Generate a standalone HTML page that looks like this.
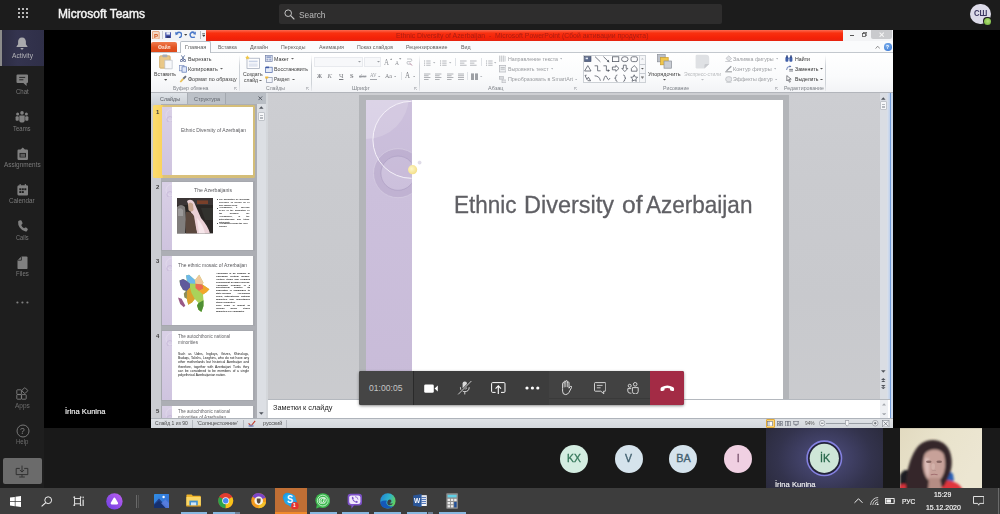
<!DOCTYPE html>
<html lang="en">
<head>
<meta charset="utf-8">
<title>Microsoft Teams</title>
<style>
html,body{margin:0;padding:0;background:#1a1a1a;}
body{width:1000px;height:514px;overflow:hidden;position:relative;font-family:"Liberation Sans",sans-serif;}
#app{position:absolute;left:0;top:0;width:1000px;height:514px;overflow:hidden;background:#1a1a1a;}
.b{position:absolute;display:block;box-sizing:border-box;}
.t{position:absolute;display:block;white-space:pre;transform-origin:0 50%;}
.clip{position:absolute;overflow:hidden;}
</style>
</head>
<body>
<div id="app">
<div class="b" style="left:0px;top:0px;width:1000px;height:29.6px;background:#1c1c1c;"></div>
<div class="b" style="left:44.4px;top:29.6px;width:955.6px;height:398.6px;background:#000;"></div>
<div class="b" style="left:44.4px;top:428px;width:955.6px;height:61px;background:#191919;"></div>
<div class="b" style="left:0px;top:29.6px;width:44.4px;height:459px;background:#1e1e1e;"></div>
<svg class="b" style="left:17.8px;top:8.3px;" width="10" height="10" viewBox="0 0 10 10"><rect x="0" y="0" width="2" height="2" rx="1" fill="#ececec"/><rect x="0" y="4" width="2" height="2" rx="1" fill="#ececec"/><rect x="0" y="8" width="2" height="2" rx="1" fill="#ececec"/><rect x="4" y="0" width="2" height="2" rx="1" fill="#ececec"/><rect x="4" y="4" width="2" height="2" rx="1" fill="#ececec"/><rect x="4" y="8" width="2" height="2" rx="1" fill="#ececec"/><rect x="8" y="0" width="2" height="2" rx="1" fill="#ececec"/><rect x="8" y="4" width="2" height="2" rx="1" fill="#ececec"/><rect x="8" y="8" width="2" height="2" rx="1" fill="#ececec"/></svg>
<span class="t" style="left:57.8px;top:7.18px;font:12.2px 'Liberation Sans',sans-serif;line-height:14.64px;color:#f4f4f4;transform:scaleX(0.983);-webkit-text-stroke:0.45px #f4f4f4;">Microsoft Teams</span>
<div class="b" style="left:279.2px;top:4px;width:442.8px;height:20px;background:#2e2d2d;border-radius:2px;"></div>
<svg class="b" style="left:283.6px;top:9px;" width="11" height="11" viewBox="0 0 11 11"><circle cx="4.2" cy="4.2" r="3.3" fill="none" stroke="#c4c4c4" stroke-width="1"/><path d="M6.7 6.7 L10 10" stroke="#c4c4c4" stroke-width="1.1" stroke-linecap="round"/></svg>
<span class="t" style="left:299px;top:8.64px;font:9.6px 'Liberation Sans',sans-serif;line-height:11.52px;color:#bdbdbd;transform:scaleX(0.872);">Search</span>
<div class="b" style="left:970.2px;top:3.6px;width:20.8px;height:20.8px;background:#dddbe9;border-radius:50%;"></div>
<span class="t" style="left:974px;top:9.18px;font:bold 8.2px 'Liberation Sans',sans-serif;line-height:9.84px;color:#3a3660;transform:scaleX(0.948);">СШ</span>
<div class="b" style="left:983.2px;top:16.7px;width:8.6px;height:8.6px;background:#1c1c1c;border-radius:50%;"></div>
<div class="b" style="left:984px;top:17.5px;width:7px;height:7px;background:radial-gradient(circle at 55% 45%,#b4e07a,#86c24e 60%,#6fae3c);border-radius:50%;"></div>
<div class="b" style="left:0px;top:29.6px;width:44.4px;height:36.4px;background:linear-gradient(90deg,#2b2b40,#34344f 40%,#2f2f48);"></div>
<div class="b" style="left:0px;top:29.6px;width:2.4px;height:36.4px;background:#8a8a8a;"></div>
<svg class="b" style="left:16px;top:36.6px;" width="12" height="13.5" viewBox="0 0 12 13.5"><path d="M6 0.4 C3.4 0.4 2.1 2.5 2.1 4.6 V7.2 L0.5 9.4 V10 H11.5 V9.4 L9.9 7.2 V4.6 C9.9 2.5 8.6 0.4 6 0.4 Z" fill="#a9a9ad"/><path d="M4.5 11 H7.5 C7.3 12.2 6.8 12.6 6 12.6 C5.2 12.6 4.7 12.2 4.5 11 Z" fill="#a9a9ad"/></svg>
<span class="t" style="left:11.5px;top:51.94px;font:6.6px 'Liberation Sans',sans-serif;line-height:7.92px;color:#b4b4b8;transform:scaleX(1.005);">Activity</span>
<svg class="b" style="left:16px;top:74px;" width="12.5" height="12.5" viewBox="0 0 12.5 12.5"><path d="M1.5 0.5 H11 Q12 0.5 12 1.5 V8 Q12 9 11 9 H10.6 V12 L7.4 9 H1.5 Q0.5 9 0.5 8 V1.5 Q0.5 0.5 1.5 0.5 Z" fill="#808080"/><path d="M3.2 3.4 H9.2 M3.2 5.8 H7.4" stroke="#1e1e1e" stroke-width="0.9"/></svg>
<span class="t" style="left:15.5px;top:87.74px;font:6.6px 'Liberation Sans',sans-serif;line-height:7.92px;color:#7a7a7a;transform:scaleX(0.918);">Chat</span>
<svg class="b" style="left:15px;top:110.5px;" width="14" height="12" viewBox="0 0 14 12"><circle cx="2.6" cy="3" r="1.5" fill="#808080"/><circle cx="7" cy="1.9" r="1.8" fill="#808080"/><circle cx="11.4" cy="3" r="1.5" fill="#808080"/><rect x="0.6" y="5.2" width="3.2" height="4.6" rx="1" fill="#808080"/><rect x="10.2" y="5.2" width="3.2" height="4.6" rx="1" fill="#808080"/><path d="M4.3 4.6 H9.7 V9.2 Q9.7 11.6 7 11.6 Q4.3 11.6 4.3 9.2 Z" fill="#808080"/></svg>
<span class="t" style="left:13.3px;top:124.64px;font:6.6px 'Liberation Sans',sans-serif;line-height:7.92px;color:#7a7a7a;transform:scaleX(0.906);">Teams</span>
<svg class="b" style="left:16.5px;top:146.5px;" width="11.5" height="13.5" viewBox="0 0 11.5 13.5"><path d="M1.6 2.6 H3.6 L5.75 0.4 L7.9 2.6 H9.9 Q11 2.6 11 3.8 V11.8 Q11 13 9.9 13 H1.6 Q0.5 13 0.5 11.8 V3.8 Q0.5 2.6 1.6 2.6 Z" fill="#808080"/><rect x="3" y="6.4" width="5.5" height="3.6" fill="none" stroke="#1e1e1e" stroke-width="0.9"/><path d="M3 8 H8.5" stroke="#1e1e1e" stroke-width="0.7"/></svg>
<span class="t" style="left:3.8px;top:160.74px;font:6.6px 'Liberation Sans',sans-serif;line-height:7.92px;color:#7a7a7a;transform:scaleX(0.970);">Assignments</span>
<svg class="b" style="left:16.5px;top:183.5px;" width="11.5" height="12" viewBox="0 0 11.5 12"><rect x="0.4" y="1.2" width="10.7" height="10.4" rx="1.6" fill="#808080"/><rect x="2.6" y="0" width="1.1" height="2.4" fill="#808080"/><rect x="7.8" y="0" width="1.1" height="2.4" fill="#808080"/><g fill="#1e1e1e"><rect x="2.3" y="4.3" width="2" height="1.9"/><rect x="4.8" y="4.3" width="2" height="1.9"/><rect x="7.3" y="4.3" width="2" height="1.9"/><rect x="2.3" y="7.1" width="2" height="1.9"/><rect x="4.8" y="7.1" width="2" height="1.9"/></g></svg>
<span class="t" style="left:9.3px;top:197.24px;font:6.6px 'Liberation Sans',sans-serif;line-height:7.92px;color:#7a7a7a;transform:scaleX(0.956);">Calendar</span>
<svg class="b" style="left:17px;top:220px;" width="11" height="12" viewBox="0 0 11 12"><path d="M2.2 0.6 L3.8 0.3 Q4.4 0.3 4.7 0.9 L5.5 3 Q5.6 3.6 5.2 4 L4.2 4.9 Q5 7 7.1 8.3 L8.2 7.6 Q8.7 7.3 9.2 7.6 L10.6 8.7 Q11 9.2 10.7 9.8 L10 11 Q9.5 11.7 8.6 11.6 Q5 11 2.7 7.6 Q0.8 4.6 1.1 1.8 Q1.3 0.9 2.2 0.6 Z" fill="#808080"/></svg>
<span class="t" style="left:15.6px;top:233.64px;font:6.6px 'Liberation Sans',sans-serif;line-height:7.92px;color:#7a7a7a;transform:scaleX(0.860);">Calls</span>
<svg class="b" style="left:17px;top:255.5px;" width="11" height="13.5" viewBox="0 0 11 13.5"><path d="M4.4 0.4 H9.4 Q10.5 0.4 10.5 1.5 V12 Q10.5 13.1 9.4 13.1 H1.6 Q0.5 13.1 0.5 12 V4.2 Z" fill="#808080"/><path d="M4.4 0.4 V4.2 H0.5" fill="none" stroke="#1e1e1e" stroke-width="0.8"/></svg>
<span class="t" style="left:15.8px;top:269.64px;font:6.6px 'Liberation Sans',sans-serif;line-height:7.92px;color:#7a7a7a;transform:scaleX(0.919);">Files</span>
<svg class="b" style="left:16px;top:301px;" width="13" height="3" viewBox="0 0 13 3"><circle cx="1.4" cy="1.5" r="1.1" fill="#808080"/><circle cx="6.4" cy="1.5" r="1.1" fill="#808080"/><circle cx="11.4" cy="1.5" r="1.1" fill="#808080"/></svg>
<svg class="b" style="left:15.5px;top:386.6px;" width="14" height="13.5" viewBox="0 0 14 13.5"><g fill="none" stroke="#808080" stroke-width="0.9"><rect x="0.8" y="2.8" width="4.6" height="4.6" rx="0.6"/><rect x="0.8" y="7.6" width="4.6" height="4.6" rx="0.6"/><rect x="5.6" y="7.6" width="4.6" height="4.6" rx="0.6"/><rect x="6.6" y="1.4" width="4.4" height="4.4" rx="0.6" transform="rotate(45 8.8 3.6)"/></g></svg>
<span class="t" style="left:14.8px;top:401.64px;font:6.6px 'Liberation Sans',sans-serif;line-height:7.92px;color:#6c6c6c;transform:scaleX(0.985);">Apps</span>
<svg class="b" style="left:15.5px;top:423.5px;" width="14" height="14" viewBox="0 0 14 14"><circle cx="7" cy="7" r="6" fill="none" stroke="#808080" stroke-width="0.9"/></svg>
<span class="t" style="left:20.1px;top:425.06px;font:9.4px 'Liberation Sans',sans-serif;line-height:11.28px;color:#808080;transform:scaleX(0.920);">?</span>
<span class="t" style="left:16.3px;top:437.84px;font:6.6px 'Liberation Sans',sans-serif;line-height:7.92px;color:#6c6c6c;transform:scaleX(0.914);">Help</span>
<div class="b" style="left:2.6px;top:458px;width:39px;height:26px;background:#6b6b6b;border-radius:2px;"></div>
<svg class="b" style="left:15px;top:464.5px;" width="14" height="13" viewBox="0 0 14 13"><g fill="none" stroke="#2a2a2a" stroke-width="0.9"><path d="M4.8 3.4 H1.2 V9.6 H12.8 V3.4 H9.2"/><path d="M7 0.6 V7 M4.8 4.9 L7 7.1 L9.2 4.9"/><path d="M7 9.6 V11.8 M4.2 12 H9.8"/></g></svg>
<span class="t" style="left:65px;top:406.72px;font:7.8px 'Liberation Sans',sans-serif;line-height:9.36px;color:#f3f3f3;transform:scaleX(0.973);-webkit-text-stroke:0.15px #f3f3f3;">İrina Kunina</span>
<div class="b" style="left:560.1px;top:444.6px;width:28.0px;height:28.0px;background:#d4ede1;border-radius:50%;"></div>
<span class="t" style="left:567.2px;top:452.32px;font:10.8px 'Liberation Sans',sans-serif;line-height:12.96px;color:#35775a;transform:scaleX(0.958);-webkit-text-stroke:0.35px #35775a;">KX</span>
<div class="b" style="left:614.6px;top:444.6px;width:28.0px;height:28.0px;background:#d5e3ec;border-radius:50%;"></div>
<span class="t" style="left:625.1px;top:452.32px;font:10.8px 'Liberation Sans',sans-serif;line-height:12.96px;color:#42606f;transform:scaleX(0.972);-webkit-text-stroke:0.35px #42606f;">V</span>
<div class="b" style="left:669.4px;top:444.6px;width:28.0px;height:28.0px;background:#d5e3ec;border-radius:50%;"></div>
<span class="t" style="left:676.2px;top:452.32px;font:10.8px 'Liberation Sans',sans-serif;line-height:12.96px;color:#42606f;-webkit-text-stroke:0.35px #42606f;">BA</span>
<div class="b" style="left:723.9px;top:444.6px;width:28.0px;height:28.0px;background:#f0d0e2;border-radius:50%;"></div>
<span class="t" style="left:736.7px;top:452.32px;font:10.8px 'Liberation Sans',sans-serif;line-height:12.96px;color:#6c4560;transform:scaleX(0.800);-webkit-text-stroke:0.35px #6c4560;">I</span>
<div class="b" style="left:765.5px;top:428px;width:117.7px;height:60.2px;background:radial-gradient(ellipse 62% 95% at 50% 50%, #4f4f82 0%, #424269 30%, #33334d 65%, #2a2a3b 100%);"></div>
<svg class="b" style="left:805px;top:439px;" width="39" height="39" viewBox="0 0 39 39"><circle cx="19.3" cy="19.3" r="17.2" fill="#23233a" stroke="#8481e0" stroke-width="1.6"/><circle cx="19.3" cy="19.3" r="14.6" fill="#cfe6d8"/></svg>
<span class="t" style="left:819.5px;top:451.34px;font:11.6px 'Liberation Sans',sans-serif;line-height:13.92px;color:#27674a;transform:scaleX(0.930);-webkit-text-stroke:0.35px #27674a;">İK</span>
<span class="t" style="left:775.4px;top:479.52px;font:7.8px 'Liberation Sans',sans-serif;line-height:9.36px;color:#f3f3f3;transform:scaleX(0.975);-webkit-text-stroke:0.15px #f3f3f3;">İrina Kunina</span>
<svg class="b" style="left:900px;top:428px;" width="82" height="60.2" viewBox="0 0 82 60"><defs><filter id="cb" x="-20%" y="-20%" width="140%" height="140%"><feGaussianBlur stdDeviation="0.9"/></filter><filter id="cb2" x="-20%" y="-20%" width="140%" height="140%"><feGaussianBlur stdDeviation="0.7"/></filter><linearGradient id="wall" x1="0" y1="0" x2="1" y2="0.4"><stop offset="0" stop-color="#e2dac0"/><stop offset="0.5" stop-color="#e9e3cc"/><stop offset="1" stop-color="#ece6d2"/></linearGradient><clipPath id="cc"><rect x="0" y="0" width="82" height="60"/></clipPath></defs><rect width="82" height="60" fill="url(#wall)"/><g clip-path="url(#cc)"><g filter="url(#cb)"><path d="M0 47 Q3 41 8 42 L12 62 H0 Z" fill="#1b1b20"/><path d="M45 46 Q50 42 53 46 L54 53 L46 55 Z" fill="#2c5fb4"/><path d="M-2 62 L0 57 Q4 55 7 57 L8 62 Z" fill="#d8333a"/><path d="M34 62 L38 55 Q46 50 54 54 Q60 56 63 62 Z" fill="#e0353c"/><path d="M6 62 C5 46 11 22 22 15 C32 9 46 12 50 24 C53 33 52 42 48 50 L44 58 L30 62 Z" fill="#36282a"/><path d="M24 28 C26 20 41 19 44 27 C46.5 36 45 45 41 50.5 C37 55 30.5 55 27 50.5 C23 45 22 36 24 28 Z" fill="#c7a199"/><path d="M29 50 H40 L42 62 H28 Z" fill="#b58d84"/><path d="M24.5 30 C25 37 25 44 28 50 C30 45 29 36 29 30 Z" fill="#e2c6c0" opacity="0.8"/></g><g filter="url(#cb2)"><ellipse cx="28.8" cy="33.6" rx="2.8" ry="1.2" fill="#7a5a56" opacity="0.85"/><ellipse cx="39.2" cy="33.6" rx="2.8" ry="1.2" fill="#7a5a56" opacity="0.85"/><path d="M30.8 46.6 Q34.2 45.8 37.6 46.6" stroke="#9a6468" stroke-width="1.1" fill="none" opacity="0.8"/><ellipse cx="33.2" cy="38.4" rx="1.8" ry="3.2" fill="#d8bab3" opacity="0.6"/><path d="M32.2 42.4 H36" stroke="#a88380" stroke-width="0.6" opacity="0.7"/></g></g></svg>
<div class="clip" style="left:151.3px;top:29.6px;width:741.3px;height:398.4px;background:#c6cacd;"><div class="b" style="left:-151.3px;top:-29.6px;width:1000px;height:514px;filter:blur(0.4px);">
<div class="b" style="left:140px;top:20px;width:770px;height:20.6px;background:#f3f4f6;"></div>
<div class="b" style="left:206.4px;top:29.6px;width:636.2px;height:11.2px;background:linear-gradient(#fb6a50 0%,#f9300f 28%,#f42208 72%,#e62410 100%);"></div>
<svg class="b" style="left:152.4px;top:30.6px;" width="7.6" height="8.6" viewBox="0 0 7.6 8.6"><rect x="0.4" y="0.4" width="6.8" height="7.8" rx="0.8" fill="#f6d9c4" stroke="#e08a50" stroke-width="0.7"/></svg>
<span class="t" style="left:154.2px;top:31.98px;font:bold 6.2px 'Liberation Sans',sans-serif;line-height:7.44px;color:#d1541c;transform:scaleX(0.966);">P</span>
<div class="b" style="left:162.4px;top:31px;width:0.6px;height:8px;background:#c9ccd1;"></div>
<svg class="b" style="left:164.8px;top:31.8px;" width="6.6" height="6.6" viewBox="0 0 6.6 6.6"><rect x="0.2" y="0.2" width="6.2" height="6.2" rx="0.5" fill="#4a58ac"/><rect x="1.4" y="0.2" width="3.6" height="2.4" fill="#e8ebf7"/><rect x="1.5" y="4" width="3.6" height="2.4" fill="#2f3878"/></svg>
<svg class="b" style="left:174.6px;top:31px;" width="7.6" height="7.4" viewBox="0 0 7.6 7.4"><path d="M1 3.2 Q2.4 0.8 5 1.4 Q7 2.2 6.6 4.4 Q6.2 6.4 4 6.8" fill="none" stroke="#4a78c8" stroke-width="1.5"/><path d="M0.2 0.8 L0.6 4.2 L3.6 3 Z" fill="#4a78c8"/></svg>
<svg class="b" style="left:183.6px;top:34.4px;" width="3.4" height="2" viewBox="0 0 3.4 2"><path d="M0 0 H3.4 L1.7 1.8 Z" fill="#444"/></svg>
<svg class="b" style="left:189.4px;top:31px;" width="7.6" height="7.4" viewBox="0 0 7.6 7.4"><path d="M5.6 1.6 Q3.2 0.4 1.6 2.2 Q0.4 4.2 2 5.8 Q3.8 7.2 5.8 5.8" fill="none" stroke="#4a78c8" stroke-width="1.5"/><path d="M6.8 0.4 L6.8 3.8 L3.8 3 Z" fill="#4a78c8"/></svg>
<div class="b" style="left:200.2px;top:31px;width:0.6px;height:8px;background:#b9bcc2;"></div>
<svg class="b" style="left:201.8px;top:33px;" width="3.6" height="4.4" viewBox="0 0 3.6 4.4"><path d="M0.2 0.4 H3.4" stroke="#555" stroke-width="0.7"/><path d="M0 1.8 H3.6 L1.8 4 Z" fill="#444"/></svg>
<span class="t" style="left:395.5px;top:31.84px;font:6.6px 'Liberation Sans',sans-serif;line-height:7.92px;color:#ab1d12;transform:scaleX(1.043);">Ethnic Diversity of Azerbaijan  -  Microsoft PowerPoint (Сбой активации продукта)</span>
<div class="b" style="left:849.8px;top:35.2px;width:4.4px;height:1.3px;background:#555;"></div>
<svg class="b" style="left:861.8px;top:32.2px;" width="5.4" height="5.4" viewBox="0 0 5.4 5.4"><rect x="1.6" y="0.4" width="3.2" height="3" fill="none" stroke="#666" stroke-width="0.8"/><rect x="0.4" y="1.6" width="3.2" height="3" fill="#f3f4f6" stroke="#555" stroke-width="0.8"/></svg>
<div class="b" style="left:871.4px;top:29.3px;width:20.4px;height:10px;background:#c9cacd;border-radius:0 0 2px 2px;"></div>
<svg class="b" style="left:878.6px;top:32px;" width="5.4" height="5.4" viewBox="0 0 5.4 5.4"><path d="M0.6 0.6 L4.8 4.8 M4.8 0.6 L0.6 4.8" stroke="#f4f4f4" stroke-width="1.1"/></svg>
<div class="b" style="left:140px;top:40.5px;width:770px;height:12px;background:#fafbfc;"></div>
<div class="b" style="left:140px;top:52px;width:770px;height:0.9px;background:#c3c8ce;"></div>
<div class="b" style="left:151.3px;top:41.6px;width:26px;height:10.6px;background:linear-gradient(#ef7a4c,#e2521f 55%,#dd4a1a);border-radius:2px 2px 0 0;"></div>
<span class="t" style="left:158px;top:43.28px;font:bold 6.2px 'Liberation Sans',sans-serif;line-height:7.44px;color:#fde7da;transform:scaleX(0.765);">Файл</span>
<div class="b" style="left:179.6px;top:41.2px;width:31.6px;height:11.8px;background:#ffffff;border:0.8px solid #b9bfc6;border-bottom:none;border-radius:2px 2px 0 0;"></div>
<span class="t" style="left:184.8px;top:43.48px;font:6.2px 'Liberation Sans',sans-serif;line-height:7.44px;color:#5e5e5e;transform:scaleX(0.908);">Главная</span>
<span class="t" style="left:217.6px;top:43.48px;font:6.2px 'Liberation Sans',sans-serif;line-height:7.44px;color:#5e5e5e;transform:scaleX(0.817);">Вставка</span>
<span class="t" style="left:249.6px;top:43.48px;font:6.2px 'Liberation Sans',sans-serif;line-height:7.44px;color:#5e5e5e;transform:scaleX(0.865);">Дизайн</span>
<span class="t" style="left:281.2px;top:43.48px;font:6.2px 'Liberation Sans',sans-serif;line-height:7.44px;color:#5e5e5e;transform:scaleX(0.840);">Переходы</span>
<span class="t" style="left:319px;top:43.48px;font:6.2px 'Liberation Sans',sans-serif;line-height:7.44px;color:#5e5e5e;transform:scaleX(0.861);">Анимация</span>
<span class="t" style="left:357px;top:43.48px;font:6.2px 'Liberation Sans',sans-serif;line-height:7.44px;color:#5e5e5e;transform:scaleX(0.845);">Показ слайдов</span>
<span class="t" style="left:406px;top:43.48px;font:6.2px 'Liberation Sans',sans-serif;line-height:7.44px;color:#5e5e5e;transform:scaleX(0.866);">Рецензирование</span>
<span class="t" style="left:461px;top:43.48px;font:6.2px 'Liberation Sans',sans-serif;line-height:7.44px;color:#5e5e5e;transform:scaleX(0.857);">Вид</span>
<svg class="b" style="left:875px;top:45px;" width="5.4" height="4.4" viewBox="0 0 5.4 4.4"><path d="M0.6 3.6 L2.7 1.2 L4.8 3.6" fill="none" stroke="#777" stroke-width="0.8"/></svg>
<div class="b" style="left:884px;top:43.2px;width:7.6px;height:7.6px;background:radial-gradient(circle at 40% 35%,#7fb2ee,#2f6fcf);border-radius:50%;"></div>
<span class="t" style="left:886.3px;top:43.5px;font:bold 6px 'Liberation Sans',sans-serif;line-height:7.2px;color:#fff;transform:scaleX(0.817);">?</span>
<div class="b" style="left:140px;top:52.9px;width:770px;height:39px;background:linear-gradient(#ffffff 0%,#fafbfc 60%,#f2f3f6 100%);"></div>
<div class="b" style="left:140px;top:91.7px;width:770px;height:1.7px;background:#b2b5bb;"></div>
<div class="b" style="left:239.2px;top:54.5px;width:0.7px;height:36px;background:linear-gradient(rgba(200,204,210,0),#cfd3d8 30%,#cfd3d8 80%,rgba(200,204,210,0.3));"></div>
<div class="b" style="left:311.2px;top:54.5px;width:0.7px;height:36px;background:linear-gradient(rgba(200,204,210,0),#cfd3d8 30%,#cfd3d8 80%,rgba(200,204,210,0.3));"></div>
<div class="b" style="left:419.2px;top:54.5px;width:0.7px;height:36px;background:linear-gradient(rgba(200,204,210,0),#cfd3d8 30%,#cfd3d8 80%,rgba(200,204,210,0.3));"></div>
<div class="b" style="left:579.6px;top:54.5px;width:0.7px;height:36px;background:linear-gradient(rgba(200,204,210,0),#cfd3d8 30%,#cfd3d8 80%,rgba(200,204,210,0.3));"></div>
<div class="b" style="left:780.6px;top:54.5px;width:0.7px;height:36px;background:linear-gradient(rgba(200,204,210,0),#cfd3d8 30%,#cfd3d8 80%,rgba(200,204,210,0.3));"></div>
<div class="b" style="left:825.2px;top:54.5px;width:0.7px;height:36px;background:linear-gradient(rgba(200,204,210,0),#cfd3d8 30%,#cfd3d8 80%,rgba(200,204,210,0.3));"></div>
<span class="t" style="left:172.6px;top:84.28px;font:6.2px 'Liberation Sans',sans-serif;line-height:7.44px;color:#7d8187;transform:scaleX(0.842);">Буфер обмена</span>
<span class="t" style="left:266.2px;top:84.28px;font:6.2px 'Liberation Sans',sans-serif;line-height:7.44px;color:#7d8187;transform:scaleX(0.816);">Слайды</span>
<span class="t" style="left:352px;top:84.28px;font:6.2px 'Liberation Sans',sans-serif;line-height:7.44px;color:#7d8187;transform:scaleX(0.884);">Шрифт</span>
<span class="t" style="left:487.6px;top:84.28px;font:6.2px 'Liberation Sans',sans-serif;line-height:7.44px;color:#7d8187;transform:scaleX(0.887);">Абзац</span>
<span class="t" style="left:663px;top:84.28px;font:6.2px 'Liberation Sans',sans-serif;line-height:7.44px;color:#7d8187;transform:scaleX(0.841);">Рисование</span>
<span class="t" style="left:784.2px;top:84.28px;font:6.2px 'Liberation Sans',sans-serif;line-height:7.44px;color:#7d8187;transform:scaleX(0.844);">Редактирование</span>
<svg class="b" style="left:234px;top:86.6px;" width="3" height="3" viewBox="0 0 3 3"><path d="M0.3 2.7 V0.3 H2.7" fill="none" stroke="#8d9197" stroke-width="0.6"/><path d="M1.4 1.4 L2.8 2.8" stroke="#8d9197" stroke-width="0.6"/></svg>
<svg class="b" style="left:305.6px;top:86.6px;" width="3" height="3" viewBox="0 0 3 3"><path d="M0.3 2.7 V0.3 H2.7" fill="none" stroke="#8d9197" stroke-width="0.6"/><path d="M1.4 1.4 L2.8 2.8" stroke="#8d9197" stroke-width="0.6"/></svg>
<svg class="b" style="left:413.6px;top:86.6px;" width="3" height="3" viewBox="0 0 3 3"><path d="M0.3 2.7 V0.3 H2.7" fill="none" stroke="#8d9197" stroke-width="0.6"/><path d="M1.4 1.4 L2.8 2.8" stroke="#8d9197" stroke-width="0.6"/></svg>
<svg class="b" style="left:574px;top:86.6px;" width="3" height="3" viewBox="0 0 3 3"><path d="M0.3 2.7 V0.3 H2.7" fill="none" stroke="#8d9197" stroke-width="0.6"/><path d="M1.4 1.4 L2.8 2.8" stroke="#8d9197" stroke-width="0.6"/></svg>
<svg class="b" style="left:775px;top:86.6px;" width="3" height="3" viewBox="0 0 3 3"><path d="M0.3 2.7 V0.3 H2.7" fill="none" stroke="#8d9197" stroke-width="0.6"/><path d="M1.4 1.4 L2.8 2.8" stroke="#8d9197" stroke-width="0.6"/></svg>
<svg class="b" style="left:158.6px;top:54.4px;" width="14" height="15.4" viewBox="0 0 14 15.4"><rect x="0.6" y="1.8" width="10.6" height="12.4" rx="1" fill="#e9c888" stroke="#c9a25a" stroke-width="0.7"/><rect x="3.4" y="0.4" width="5" height="2.8" rx="0.8" fill="#a9adb6"/><path d="M5.8 6.2 H13.2 V14.8 H5.8 Z" fill="#f7f8fb" stroke="#b4b9c4" stroke-width="0.6"/></svg>
<span class="t" style="left:154.2px;top:70.28px;font:6.2px 'Liberation Sans',sans-serif;line-height:7.44px;color:#3a3a3a;transform:scaleX(0.839);">Вставить</span>
<svg class="b" style="left:163.8px;top:78.8px;" width="3.4" height="2" viewBox="0 0 3.4 2"><path d="M0 0 H3.4 L1.7 1.8 Z" fill="#555"/></svg>
<svg class="b" style="left:180px;top:55.2px;" width="6" height="7" viewBox="0 0 6 7"><path d="M1.4 0.4 L4.4 5 M4.6 0.4 L1.6 5" stroke="#5a6e9a" stroke-width="0.9"/><circle cx="1.4" cy="5.6" r="1.1" fill="none" stroke="#3d4f82" stroke-width="0.8"/><circle cx="4.6" cy="5.6" r="1.1" fill="none" stroke="#3d4f82" stroke-width="0.8"/></svg>
<span class="t" style="left:187.6px;top:54.88px;font:6.2px 'Liberation Sans',sans-serif;line-height:7.44px;color:#3a3a3a;transform:scaleX(0.850);">Вырезать</span>
<svg class="b" style="left:179px;top:65.4px;" width="8" height="7.4" viewBox="0 0 8 7.4"><rect x="0.4" y="0.4" width="4.6" height="5.4" fill="#eef2fa" stroke="#7f93c2" stroke-width="0.7"/><rect x="3" y="1.8" width="4.6" height="5.4" fill="#dfe7f8" stroke="#5d77b4" stroke-width="0.7"/></svg>
<span class="t" style="left:187.6px;top:65.28px;font:6.2px 'Liberation Sans',sans-serif;line-height:7.44px;color:#3a3a3a;transform:scaleX(0.900);">Копировать</span>
<svg class="b" style="left:219.6px;top:68.4px;" width="3" height="1.8" viewBox="0 0 3 1.8"><path d="M0 0 H3 L1.5 1.6 Z" fill="#666"/></svg>
<svg class="b" style="left:179px;top:75.4px;" width="8" height="7.6" viewBox="0 0 8 7.6"><path d="M0.6 6.8 L3.4 3.2 L5 4.6 L2 7.4 Z" fill="#e9c25a"/><path d="M3.6 3 L6.4 0.6 L7.6 1.8 L5 4.4 Z" fill="#6a6f7a"/></svg>
<span class="t" style="left:187.6px;top:75.48px;font:6.2px 'Liberation Sans',sans-serif;line-height:7.44px;color:#3a3a3a;transform:scaleX(0.876);">Формат по образцу</span>
<svg class="b" style="left:244.6px;top:54.6px;" width="15" height="15" viewBox="0 0 15 15"><rect x="2" y="3.2" width="12.4" height="10.4" fill="#fdfdfe" stroke="#9aa3b4" stroke-width="0.7"/><rect x="3.8" y="5.6" width="8.8" height="1.6" fill="#c8d2e6"/><rect x="3.8" y="8.4" width="8.8" height="3.4" fill="#e0e5f0"/><path d="M2.4 0.2 L3.1 1.7 L4.7 2 L3.5 3 L3.9 4.6 L2.4 3.8 L0.9 4.6 L1.3 3 L0.1 2 L1.7 1.7 Z" fill="#f2c744"/></svg>
<span class="t" style="left:242.6px;top:70.28px;font:6.2px 'Liberation Sans',sans-serif;line-height:7.44px;color:#3a3a3a;transform:scaleX(0.833);">Создать</span>
<span class="t" style="left:243.6px;top:76.28px;font:6.2px 'Liberation Sans',sans-serif;line-height:7.44px;color:#3a3a3a;transform:scaleX(0.813);">слайд</span>
<svg class="b" style="left:258.8px;top:79.6px;" width="3" height="1.8" viewBox="0 0 3 1.8"><path d="M0 0 H3 L1.5 1.6 Z" fill="#666"/></svg>
<svg class="b" style="left:265px;top:55.4px;" width="7.6" height="6.8" viewBox="0 0 7.6 6.8"><rect x="0.4" y="0.4" width="6.8" height="6" fill="#eef1f8" stroke="#6f7fa8" stroke-width="0.7"/><rect x="1.4" y="1.4" width="4.8" height="1.4" fill="#7d8fc0"/><rect x="1.4" y="3.6" width="2" height="2" fill="#9aa7cc"/><rect x="4.2" y="3.6" width="2" height="2" fill="#9aa7cc"/></svg>
<span class="t" style="left:274.2px;top:54.88px;font:6.2px 'Liberation Sans',sans-serif;line-height:7.44px;color:#3a3a3a;transform:scaleX(0.856);">Макет</span>
<svg class="b" style="left:291.2px;top:58px;" width="3" height="1.8" viewBox="0 0 3 1.8"><path d="M0 0 H3 L1.5 1.6 Z" fill="#666"/></svg>
<svg class="b" style="left:265px;top:65.6px;" width="7.6" height="7" viewBox="0 0 7.6 7"><rect x="0.4" y="1.2" width="6.8" height="5.4" fill="#e6ecf8" stroke="#4c66a8" stroke-width="0.7"/><path d="M1 0.6 H4 V2.2 H1 Z" fill="#3f5aa6"/></svg>
<span class="t" style="left:274.2px;top:65.28px;font:6.2px 'Liberation Sans',sans-serif;line-height:7.44px;color:#3a3a3a;transform:scaleX(0.858);">Восстановить</span>
<svg class="b" style="left:265px;top:75.8px;" width="7.6" height="7" viewBox="0 0 7.6 7"><rect x="1.4" y="1.4" width="5.8" height="5" fill="#f4f6fb" stroke="#8a93a8" stroke-width="0.7"/><path d="M0.2 0.4 H3.4 L3 2.4 H0.2 Z" fill="#f0b93c"/></svg>
<span class="t" style="left:274.2px;top:75.48px;font:6.2px 'Liberation Sans',sans-serif;line-height:7.44px;color:#3a3a3a;transform:scaleX(0.763);">Раздел</span>
<svg class="b" style="left:292px;top:78.6px;" width="3" height="1.8" viewBox="0 0 3 1.8"><path d="M0 0 H3 L1.5 1.6 Z" fill="#666"/></svg>
<div class="b" style="left:314px;top:57.4px;width:48.6px;height:9.6px;background:#f7f8fa;border:0.7px solid #e8eaee;"></div>
<div class="b" style="left:364px;top:57.4px;width:17.4px;height:9.6px;background:#f7f8fa;border:0.7px solid #e8eaee;"></div>
<svg class="b" style="left:357.6px;top:61.4px;" width="3" height="1.8" viewBox="0 0 3 1.8"><path d="M0 0 H3 L1.5 1.6 Z" fill="#9a9da2"/></svg>
<svg class="b" style="left:376.6px;top:61.4px;" width="3" height="1.8" viewBox="0 0 3 1.8"><path d="M0 0 H3 L1.5 1.6 Z" fill="#9a9da2"/></svg>
<span class="t" style="left:384.4px;top:57.64px;font:7.6px 'Liberation Serif',serif;line-height:9.12px;color:#8e9196;transform:scaleX(0.912);">A</span>
<span class="t" style="left:395.4px;top:58.76px;font:6.4px 'Liberation Serif',serif;line-height:7.68px;color:#8e9196;transform:scaleX(0.865);">A</span>
<svg class="b" style="left:389.6px;top:57.8px;" width="2.4" height="2" viewBox="0 0 2.4 2"><path d="M0 2 L1.2 0.2 L2.4 2 Z" fill="#9a9da2"/></svg>
<svg class="b" style="left:399.4px;top:58.2px;" width="2.4" height="2" viewBox="0 0 2.4 2"><path d="M0 0 L1.2 1.8 L2.4 0 Z" fill="#9a9da2"/></svg>
<svg class="b" style="left:406px;top:57.8px;" width="7" height="8" viewBox="0 0 7 8"><path d="M1 1 H5.4 Q6.4 2.4 5 3.6 H1.4 Q0.4 5 1.6 6.2 H5.2" fill="none" stroke="#b4b7bc" stroke-width="0.8"/><path d="M3.4 5 L6.4 7.6" stroke="#c9a0b4" stroke-width="1"/></svg>
<span class="t" style="left:317.2px;top:72.24px;font:bold 6.6px 'Liberation Serif',serif;line-height:7.92px;color:#7a7c81;transform:scaleX(0.766);">Ж</span>
<span class="t" style="left:327.4px;top:72.24px;font:italic 6.6px 'Liberation Serif',serif;line-height:7.92px;color:#7a7c81;">К</span>
<span class="t" style="left:338.6px;top:72.24px;font:6.6px 'Liberation Serif',serif;line-height:7.92px;color:#7a7c81;transform:scaleX(1.024);text-decoration:underline;">Ч</span>
<span class="t" style="left:350.4px;top:72.24px;font:bold 6.6px 'Liberation Serif',serif;line-height:7.92px;color:#7a7c81;transform:scaleX(0.980);">S</span>
<span class="t" style="left:359px;top:72.84px;font:5.6px 'Liberation Serif',serif;line-height:6.72px;color:#9a9da2;transform:scaleX(0.953);text-decoration:line-through;">abc</span>
<span class="t" style="left:370px;top:71.96px;font:5.4px 'Liberation Serif',serif;line-height:6.48px;color:#9a9da2;transform:scaleX(0.902);">AV</span>
<div class="b" style="left:370px;top:78.8px;width:6.6px;height:0.6px;background:#a4a7ac;"></div>
<svg class="b" style="left:378.4px;top:75.8px;" width="2.4" height="1.6" viewBox="0 0 2.4 1.6"><path d="M0 0 H2.4 L1.2 1.4 Z" fill="#a4a7ac"/></svg>
<span class="t" style="left:385px;top:72.36px;font:6.4px 'Liberation Serif',serif;line-height:7.68px;color:#7a7c81;transform:scaleX(0.939);">Aa</span>
<svg class="b" style="left:393.6px;top:75.8px;" width="2.4" height="1.6" viewBox="0 0 2.4 1.6"><path d="M0 0 H2.4 L1.2 1.4 Z" fill="#a4a7ac"/></svg>
<span class="t" style="left:405px;top:71.56px;font:7.4px 'Liberation Serif',serif;line-height:8.88px;color:#7a7c81;transform:scaleX(0.936);">A</span>
<svg class="b" style="left:413px;top:75.8px;" width="2.4" height="1.6" viewBox="0 0 2.4 1.6"><path d="M0 0 H2.4 L1.2 1.4 Z" fill="#a4a7ac"/></svg>
<div class="b" style="left:401.2px;top:72.4px;width:0.6px;height:8px;background:#dfe2e6;"></div>
<svg class="b" style="left:424px;top:59.6px;" width="7.0" height="7.300000000000001" viewBox="0 0 7.0 7.300000000000001"><rect x="2.2" y="0.6" width="4.3999999999999995" height="0.8" fill="#a6a9ae"/><rect x="0" y="0.5" width="1.1" height="1" fill="#a6a9ae"/><rect x="2.2" y="2.7" width="4.3999999999999995" height="0.8" fill="#a6a9ae"/><rect x="0" y="2.6" width="1.1" height="1" fill="#a6a9ae"/><rect x="2.2" y="4.8" width="4.3999999999999995" height="0.8" fill="#a6a9ae"/><rect x="0" y="4.7" width="1.1" height="1" fill="#a6a9ae"/></svg>
<svg class="b" style="left:433.4px;top:62px;" width="2.4" height="1.6" viewBox="0 0 2.4 1.6"><path d="M0 0 H2.4 L1.2 1.4 Z" fill="#b4b7bc"/></svg>
<svg class="b" style="left:440px;top:59.6px;" width="7.0" height="7.300000000000001" viewBox="0 0 7.0 7.300000000000001"><rect x="2.2" y="0.6" width="4.3999999999999995" height="0.8" fill="#a6a9ae"/><rect x="0" y="0.5" width="1.1" height="1" fill="#a6a9ae"/><rect x="2.2" y="2.7" width="4.3999999999999995" height="0.8" fill="#a6a9ae"/><rect x="0" y="2.6" width="1.1" height="1" fill="#a6a9ae"/><rect x="2.2" y="4.8" width="4.3999999999999995" height="0.8" fill="#a6a9ae"/><rect x="0" y="4.7" width="1.1" height="1" fill="#a6a9ae"/></svg>
<svg class="b" style="left:449.4px;top:62px;" width="2.4" height="1.6" viewBox="0 0 2.4 1.6"><path d="M0 0 H2.4 L1.2 1.4 Z" fill="#b4b7bc"/></svg>
<div class="b" style="left:455.4px;top:58.4px;width:0.6px;height:8px;background:#dfe2e6;"></div>
<svg class="b" style="left:460px;top:59.6px;" width="7.0" height="7.300000000000001" viewBox="0 0 7.0 7.300000000000001"><rect x="0" y="0.6" width="6.6" height="0.8" fill="#a6a9ae"/><rect x="0" y="2.7" width="4.4" height="0.8" fill="#a6a9ae"/><rect x="0" y="4.8" width="6.6" height="0.8" fill="#a6a9ae"/></svg>
<svg class="b" style="left:470.4px;top:59.6px;" width="7.0" height="7.300000000000001" viewBox="0 0 7.0 7.300000000000001"><rect x="0" y="0.6" width="6.6" height="0.8" fill="#a6a9ae"/><rect x="0" y="2.7" width="4.4" height="0.8" fill="#a6a9ae"/><rect x="0" y="4.8" width="6.6" height="0.8" fill="#a6a9ae"/></svg>
<div class="b" style="left:481.4px;top:58.4px;width:0.6px;height:8px;background:#dfe2e6;"></div>
<svg class="b" style="left:486px;top:59.6px;" width="7.0" height="7.300000000000001" viewBox="0 0 7.0 7.300000000000001"><rect x="2.2" y="0.6" width="4.3999999999999995" height="0.8" fill="#a6a9ae"/><rect x="0" y="0.5" width="1.1" height="1" fill="#a6a9ae"/><rect x="2.2" y="2.7" width="4.3999999999999995" height="0.8" fill="#a6a9ae"/><rect x="0" y="2.6" width="1.1" height="1" fill="#a6a9ae"/><rect x="2.2" y="4.8" width="4.3999999999999995" height="0.8" fill="#a6a9ae"/><rect x="0" y="4.7" width="1.1" height="1" fill="#a6a9ae"/></svg>
<svg class="b" style="left:494.4px;top:62px;" width="2.4" height="1.6" viewBox="0 0 2.4 1.6"><path d="M0 0 H2.4 L1.2 1.4 Z" fill="#b4b7bc"/></svg>
<svg class="b" style="left:424px;top:72.8px;" width="6.800000000000001" height="8.2" viewBox="0 0 6.800000000000001 8.2"><rect x="0" y="0.6" width="6.4" height="0.8" fill="#9da0a5"/><rect x="0" y="2.4" width="4.6" height="0.8" fill="#9da0a5"/><rect x="0" y="4.2" width="6.4" height="0.8" fill="#9da0a5"/><rect x="0" y="6.0" width="4.6" height="0.8" fill="#9da0a5"/></svg>
<svg class="b" style="left:435.4px;top:72.8px;" width="6.800000000000001" height="8.2" viewBox="0 0 6.800000000000001 8.2"><rect x="0" y="0.6" width="6.4" height="0.8" fill="#9da0a5"/><rect x="0" y="2.4" width="4.6" height="0.8" fill="#9da0a5"/><rect x="0" y="4.2" width="6.4" height="0.8" fill="#9da0a5"/><rect x="0" y="6.0" width="4.6" height="0.8" fill="#9da0a5"/></svg>
<svg class="b" style="left:446.8px;top:72.8px;" width="6.800000000000001" height="8.2" viewBox="0 0 6.800000000000001 8.2"><rect x="0" y="0.6" width="6.4" height="0.8" fill="#9da0a5"/><rect x="0" y="2.4" width="4.6" height="0.8" fill="#9da0a5"/><rect x="0" y="4.2" width="6.4" height="0.8" fill="#9da0a5"/><rect x="0" y="6.0" width="4.6" height="0.8" fill="#9da0a5"/></svg>
<svg class="b" style="left:457.6px;top:72.8px;" width="6.800000000000001" height="8.2" viewBox="0 0 6.800000000000001 8.2"><rect x="0" y="0.6" width="6.4" height="0.8" fill="#9da0a5"/><rect x="0" y="2.4" width="6.4" height="0.8" fill="#9da0a5"/><rect x="0" y="4.2" width="6.4" height="0.8" fill="#9da0a5"/><rect x="0" y="6.0" width="6.4" height="0.8" fill="#9da0a5"/></svg>
<div class="b" style="left:466.6px;top:72.4px;width:0.6px;height:8px;background:#dfe2e6;"></div>
<svg class="b" style="left:471px;top:72.6px;" width="7.4" height="7.6" viewBox="0 0 7.4 7.6"><g fill="#9da0a5"><rect x="0" y="0.4" width="3" height="6.8"/><rect x="4" y="0.4" width="3" height="6.8"/></g></svg>
<svg class="b" style="left:480.4px;top:75.8px;" width="2.4" height="1.6" viewBox="0 0 2.4 1.6"><path d="M0 0 H2.4 L1.2 1.4 Z" fill="#b4b7bc"/></svg>
<svg class="b" style="left:498.6px;top:54.8px;" width="7" height="7.4" viewBox="0 0 7 7.4"><path d="M0.8 0.6 V6.8 M2.8 0.6 V6.8 M4.8 0.6 V6.8" stroke="#b0b3b8" stroke-width="0.9"/><path d="M6.4 1 V6.4" stroke="#c4c7cc" stroke-width="0.6"/></svg>
<span class="t" style="left:507.6px;top:54.68px;font:6.2px 'Liberation Sans',sans-serif;line-height:7.44px;color:#999b9f;transform:scaleX(0.852);">Направление текста</span>
<svg class="b" style="left:559.6px;top:58px;" width="2.4" height="1.6" viewBox="0 0 2.4 1.6"><path d="M0 0 H2.4 L1.2 1.4 Z" fill="#b4b7bc"/></svg>
<svg class="b" style="left:498.6px;top:65.4px;" width="7.4" height="7.4" viewBox="0 0 7.4 7.4"><rect x="0.4" y="0.4" width="6.6" height="6.6" fill="#eef0f2" stroke="#b0b3b8" stroke-width="0.7"/><path d="M1.6 2.6 H5.8 M1.6 4.2 H5.8" stroke="#a6a9ae" stroke-width="0.7"/></svg>
<span class="t" style="left:507.6px;top:65.28px;font:6.2px 'Liberation Sans',sans-serif;line-height:7.44px;color:#999b9f;transform:scaleX(0.842);">Выровнять текст</span>
<svg class="b" style="left:550.6px;top:68.4px;" width="2.4" height="1.6" viewBox="0 0 2.4 1.6"><path d="M0 0 H2.4 L1.2 1.4 Z" fill="#b4b7bc"/></svg>
<svg class="b" style="left:498.6px;top:75.6px;" width="7.6" height="7.4" viewBox="0 0 7.6 7.4"><rect x="0.4" y="0.6" width="4" height="2.6" fill="#d9dbde" stroke="#b0b3b8" stroke-width="0.6"/><rect x="3" y="4" width="4.2" height="2.8" fill="#e6e7ea" stroke="#b0b3b8" stroke-width="0.6"/></svg>
<span class="t" style="left:507.6px;top:75.48px;font:6.2px 'Liberation Sans',sans-serif;line-height:7.44px;color:#999b9f;transform:scaleX(0.866);">Преобразовать в SmartArt</span>
<svg class="b" style="left:574.6px;top:78.6px;" width="2.4" height="1.6" viewBox="0 0 2.4 1.6"><path d="M0 0 H2.4 L1.2 1.4 Z" fill="#b4b7bc"/></svg>
<div class="b" style="left:582.6px;top:54.5px;width:63.6px;height:28.2px;background:#fcfcfd;border:0.7px solid #cdd1d6;"></div>
<div class="b" style="left:638.8px;top:54.5px;width:7.4px;height:28.2px;background:#f5f6f8;border:0.7px solid #cdd1d6;"></div>
<div class="b" style="left:638.8px;top:63.6px;width:7.4px;height:0.7px;background:#c8ccd2;"></div>
<div class="b" style="left:638.8px;top:73px;width:7.4px;height:0.7px;background:#c8ccd2;"></div>
<svg class="b" style="left:641.2px;top:58.4px;" width="2.8" height="1.8" viewBox="0 0 2.8 1.8"><path d="M0 1.6 L1.4 0 L2.8 1.6 Z" fill="#b8bbc0"/></svg>
<svg class="b" style="left:641.2px;top:68px;" width="2.8" height="1.8" viewBox="0 0 2.8 1.8"><path d="M0 0 H2.8 L1.4 1.6 Z" fill="#555"/></svg>
<svg class="b" style="left:641.2px;top:76.4px;" width="2.8" height="3" viewBox="0 0 2.8 3"><path d="M0 0.3 H2.8" stroke="#555" stroke-width="0.6"/><path d="M0 1.2 H2.8 L1.4 2.8 Z" fill="#555"/></svg>
<svg class="b" style="left:582.6px;top:53.9px;" width="58" height="29" viewBox="0 0 58 29"><rect x="1.6" y="2.6" width="6.4" height="5" fill="#5b6a8c" stroke="#3d4660" stroke-width="0.6"/><rect x="2.6" y="3.6" width="2.4" height="1.6" fill="#e4e8f2"/><path d="M12 2.6 L17.4 7.8" fill="none" stroke="#555b66" stroke-width="0.8"/><path d="M20.4 2.6 L25.6 7.6" fill="none" stroke="#555b66" stroke-width="0.8"/><path d="M26.4 8.4 L23.8 7.6 L25.6 5.8 Z" fill="#555b66"/><rect x="29.4" y="2.8" width="6.4" height="4.8" fill="none" stroke="#555b66" stroke-width="0.8"/><ellipse cx="41.8" cy="5.2" rx="3.3" ry="2.5" fill="none" stroke="#555b66" stroke-width="0.8"/><rect x="48" y="2.8" width="6.4" height="4.8" rx="1.6" fill="none" stroke="#555b66" stroke-width="0.8"/><path d="M4.8 11.6 L8 17 H1.6 Z" fill="none" stroke="#555b66" stroke-width="0.8"/><path d="M11.6 11.8 H14.6 V16.8 H17.6" fill="none" stroke="#555b66" stroke-width="0.8"/><path d="M20.4 11.8 H23.4 V16.6 H25.4" fill="none" stroke="#555b66" stroke-width="0.8"/><path d="M27 16.6 L24.8 15.2 V18 Z" fill="#555b66"/><path d="M29.4 13 H32.8 V11.4 L36 14.4 L32.8 17.4 V15.8 H29.4 Z" fill="none" stroke="#555b66" stroke-width="0.8"/><path d="M40.4 11.2 H43.2 V14.4 H44.8 L41.8 17.6 L38.8 14.4 H40.4 Z" fill="none" stroke="#555b66" stroke-width="0.8"/><path d="M48.4 17.2 V14.4 L51.2 11.6 L54 14.4 V17.2 Z" fill="none" stroke="#555b66" stroke-width="0.8"/><path d="M2 21.4 L4 25.6 L5.4 23.2 L7.6 26.8 M2 21.4 L3.6 21.2 M4.6 26.6 L7.6 26.8" fill="none" stroke="#555b66" stroke-width="0.8"/><path d="M11.6 21.8 Q16.6 22 17.4 26.8" fill="none" stroke="#555b66" stroke-width="0.8"/><path d="M20.4 26.6 Q22.4 19 24 23.6 Q25.4 27.6 27 24" fill="none" stroke="#555b66" stroke-width="0.8"/><path d="M34.4 21 Q32.8 21 32.8 22.6 V23.2 Q32.8 24.2 31.6 24.2 Q32.8 24.2 32.8 25.2 V25.8 Q32.8 27.4 34.4 27.4" fill="none" stroke="#555b66" stroke-width="0.8"/><path d="M40.2 21 Q41.8 21 41.8 22.6 V23.2 Q41.8 24.2 43 24.2 Q41.8 24.2 41.8 25.2 V25.8 Q41.8 27.4 40.2 27.4" fill="none" stroke="#555b66" stroke-width="0.8"/><path d="M51.2 20.8 L52.2 23 L54.6 23.3 L52.8 24.9 L53.3 27.3 L51.2 26.1 L49.1 27.3 L49.6 24.9 L47.8 23.3 L50.2 23 Z" fill="none" stroke="#555b66" stroke-width="0.8"/></svg>
<svg class="b" style="left:657px;top:54.4px;" width="16" height="15.4" viewBox="0 0 16 15.4"><rect x="0.6" y="0.6" width="7.6" height="7.2" fill="#bcc0c8" stroke="#8a8f98" stroke-width="0.7"/><rect x="3.6" y="3.6" width="7.6" height="7.2" fill="#f0c64a" stroke="#c89a2a" stroke-width="0.7"/><rect x="7" y="7" width="7.6" height="7.2" fill="#c9cdd4" stroke="#8a8f98" stroke-width="0.7"/></svg>
<span class="t" style="left:648.4px;top:70.28px;font:6.2px 'Liberation Sans',sans-serif;line-height:7.44px;color:#3a3a3a;transform:scaleX(0.885);">Упорядочить</span>
<svg class="b" style="left:663.2px;top:78.8px;" width="3" height="1.8" viewBox="0 0 3 1.8"><path d="M0 0 H3 L1.5 1.6 Z" fill="#555"/></svg>
<svg class="b" style="left:695.4px;top:54.4px;" width="15" height="15.4" viewBox="0 0 15 15.4"><path d="M2 0.8 H11 Q14.2 0.8 14.2 4 V10 L9.4 14.6 H2 Q0.6 14.6 0.6 13.2 V2.2 Q0.6 0.8 2 0.8 Z" fill="#dfe1e4"/><path d="M14.2 10 H10.8 Q9.4 10 9.4 11.4 V14.6 Z" fill="#c9cbcf"/></svg>
<span class="t" style="left:684px;top:70.28px;font:6.2px 'Liberation Sans',sans-serif;line-height:7.44px;color:#b7b9bc;transform:scaleX(0.818);">Экспресс-стили</span>
<svg class="b" style="left:700.8px;top:78.8px;" width="3" height="1.8" viewBox="0 0 3 1.8"><path d="M0 0 H3 L1.5 1.6 Z" fill="#bcbec2"/></svg>
<svg class="b" style="left:724.8px;top:55px;" width="7.6" height="7.2" viewBox="0 0 7.6 7.2"><path d="M1 3.4 L3.8 0.8 L6.6 3.6 L3.8 6.2 Z" fill="#e2e3e6" stroke="#b0b3b8" stroke-width="0.6"/><rect x="0.2" y="6.2" width="7" height="1" fill="#c4c6ca"/></svg>
<span class="t" style="left:733.2px;top:54.88px;font:6.2px 'Liberation Sans',sans-serif;line-height:7.44px;color:#999b9f;transform:scaleX(0.859);">Заливка фигуры</span>
<svg class="b" style="left:775.6px;top:58px;" width="2.4" height="1.6" viewBox="0 0 2.4 1.6"><path d="M0 0 H2.4 L1.2 1.4 Z" fill="#b4b7bc"/></svg>
<svg class="b" style="left:724.8px;top:65.4px;" width="7.6" height="7.2" viewBox="0 0 7.6 7.2"><path d="M1 5.4 L5.8 0.8 L6.8 1.8 L2 6.2 Z" fill="#9a9da2"/><rect x="0.2" y="6.4" width="7" height="0.9" fill="#8a8d92"/></svg>
<span class="t" style="left:733.2px;top:65.28px;font:6.2px 'Liberation Sans',sans-serif;line-height:7.44px;color:#999b9f;transform:scaleX(0.892);">Контур фигуры</span>
<svg class="b" style="left:773.6px;top:68.4px;" width="2.4" height="1.6" viewBox="0 0 2.4 1.6"><path d="M0 0 H2.4 L1.2 1.4 Z" fill="#b4b7bc"/></svg>
<svg class="b" style="left:724.8px;top:75.6px;" width="7.6" height="7.2" viewBox="0 0 7.6 7.2"><ellipse cx="3.8" cy="3.2" rx="3.2" ry="2.6" fill="#e4e5e8" stroke="#b0b3b8" stroke-width="0.6"/><ellipse cx="3.8" cy="6.2" rx="3" ry="0.8" fill="#cfd1d4"/></svg>
<span class="t" style="left:733.2px;top:75.48px;font:6.2px 'Liberation Sans',sans-serif;line-height:7.44px;color:#999b9f;transform:scaleX(0.840);">Эффекты фигур</span>
<svg class="b" style="left:774.6px;top:78.6px;" width="2.4" height="1.6" viewBox="0 0 2.4 1.6"><path d="M0 0 H2.4 L1.2 1.4 Z" fill="#b4b7bc"/></svg>
<svg class="b" style="left:785.2px;top:55px;" width="8" height="7.2" viewBox="0 0 8 7.2"><rect x="0.4" y="2" width="3" height="4.8" rx="1" fill="#3f5ea8"/><rect x="4.4" y="2" width="3" height="4.8" rx="1" fill="#3f5ea8"/><rect x="1.2" y="0.4" width="1.6" height="2.4" fill="#2e4480"/><rect x="5.2" y="0.4" width="1.6" height="2.4" fill="#2e4480"/><rect x="3" y="2.8" width="1.8" height="1.4" fill="#6f86c0"/></svg>
<span class="t" style="left:794.6px;top:54.88px;font:6.2px 'Liberation Sans',sans-serif;line-height:7.44px;color:#2e2e2e;transform:scaleX(0.850);">Найти</span>
<svg class="b" style="left:785.6px;top:65.4px;" width="7.6" height="7.4" viewBox="0 0 7.6 7.4"><path d="M0.6 5 Q0.6 1.2 4 1.4" fill="none" stroke="#4c66a8" stroke-width="0.8"/><path d="M3.6 0.2 L5.4 1.4 L3.6 2.6 Z" fill="#4c66a8"/><path d="M3.2 6 H7 M3.2 4.4 H7" stroke="#5a5f6a" stroke-width="0.8"/></svg>
<span class="t" style="left:794.6px;top:65.28px;font:6.2px 'Liberation Sans',sans-serif;line-height:7.44px;color:#2e2e2e;transform:scaleX(0.841);">Заменить</span>
<svg class="b" style="left:820.2px;top:68.4px;" width="3" height="1.8" viewBox="0 0 3 1.8"><path d="M0 0 H3 L1.5 1.6 Z" fill="#555"/></svg>
<svg class="b" style="left:786.2px;top:75.4px;" width="6" height="7.6" viewBox="0 0 6 7.6"><path d="M0.8 0.6 V6 L2.2 4.6 L3.4 7.2 L4.4 6.8 L3.2 4.2 H5.2 Z" fill="#fdfdfd" stroke="#3a3d44" stroke-width="0.6"/></svg>
<span class="t" style="left:794.6px;top:75.48px;font:6.2px 'Liberation Sans',sans-serif;line-height:7.44px;color:#2e2e2e;transform:scaleX(0.820);">Выделить</span>
<svg class="b" style="left:820.2px;top:78.6px;" width="3" height="1.8" viewBox="0 0 3 1.8"><path d="M0 0 H3 L1.5 1.6 Z" fill="#555"/></svg>
<div class="b" style="left:140px;top:93.4px;width:770px;height:340px;background:linear-gradient(#cdced2 0%,#cacbcf 25%,#c8c9cd 60%,#cbcccf 100%);"></div>
<div class="b" style="left:151.3px;top:93.4px;width:115px;height:325px;background:#acaeb4;"></div>
<div class="b" style="left:151.3px;top:93.4px;width:9.4px;height:325px;background:#cbcdd2;"></div>
<div class="b" style="left:151.3px;top:93.4px;width:115px;height:10.2px;background:#b9bec5;"></div>
<div class="b" style="left:151.3px;top:93.4px;width:36.8px;height:10.2px;background:linear-gradient(#dfe3e8,#cdd2d8);border-right:0.7px solid #a9aeb5;"></div>
<div class="b" style="left:188.1px;top:93.4px;width:37.6px;height:10.2px;background:#bcc1c8;border-right:0.7px solid #a3a8af;"></div>
<span class="t" style="left:159.8px;top:94.68px;font:6.2px 'Liberation Sans',sans-serif;line-height:7.44px;color:#555a62;transform:scaleX(0.868);">Слайды</span>
<span class="t" style="left:194px;top:94.68px;font:6.2px 'Liberation Sans',sans-serif;line-height:7.44px;color:#5f646c;transform:scaleX(0.886);">Структура</span>
<svg class="b" style="left:258.4px;top:96.4px;" width="4.6" height="4.6" viewBox="0 0 4.6 4.6"><path d="M0.5 0.5 L4.1 4.1 M4.1 0.5 L0.5 4.1" stroke="#4f545c" stroke-width="0.9"/></svg>
<div class="b" style="left:266px;top:93.4px;width:2.2px;height:325px;background:#d4d7db;"></div>
<div class="b" style="left:256.6px;top:103.6px;width:9.4px;height:314.8px;background:#dcdfe4;"></div>
<svg class="b" style="left:259px;top:106px;" width="4.6" height="3" viewBox="0 0 4.6 3"><path d="M0 2.8 L2.3 0.2 L4.6 2.8 Z" fill="#50545c"/></svg>
<div class="b" style="left:257.8px;top:112.2px;width:7px;height:8.8px;background:#f6f7f9;border:0.7px solid #c0c4ca;border-radius:1px;"></div>
<div class="b" style="left:259.8px;top:115.2px;width:3px;height:0.5px;background:#b4b8be;"></div>
<div class="b" style="left:259.8px;top:116.6px;width:3px;height:0.5px;background:#b4b8be;"></div>
<div class="b" style="left:259.8px;top:118px;width:3px;height:0.5px;background:#b4b8be;"></div>
<svg class="b" style="left:259px;top:412px;" width="4.6" height="3" viewBox="0 0 4.6 3"><path d="M0 0.2 H4.6 L2.3 2.8 Z" fill="#50545c"/></svg>
<div class="b" style="left:152.8px;top:104.8px;width:102.4px;height:73.3px;background:linear-gradient(90deg,#fcdc70 0%,#fad35c 9%,#dcc27c 10%,#d3bd78 100%);border-radius:1.5px;"></div>
<div class="b" style="left:162.4px;top:107.2px;width:90.8px;height:68.3px;background:#ffffff;"></div>
<div class="b" style="left:162.4px;top:107.2px;width:10px;height:68.3px;background:linear-gradient(#d9d0e6,#cfc4df);"></div>
<svg class="b" style="left:162.4px;top:108.2px;" width="10" height="14" viewBox="0 0 10 14"><circle cx="10" cy="7" r="6" fill="none" stroke="#ebe5f3" stroke-width="0.5" opacity="0.8"/><circle cx="8" cy="11.5" r="3" fill="none" stroke="#bfb1d3" stroke-width="1" opacity="0.6"/></svg>
<span class="t" style="left:155.9px;top:107.78px;font:bold 6.2px 'Liberation Sans',sans-serif;line-height:7.44px;color:#3c3c3c;transform:scaleX(0.956);">1</span>
<span class="t" style="left:181px;top:126.56px;font:5.4px 'Liberation Sans',sans-serif;line-height:6.48px;color:#5c5c60;transform:scaleX(0.931);">Ethnic Diversity of Azerbaijan</span>
<div class="b" style="left:161.4px;top:181.29999999999998px;width:93.6px;height:70.2px;background:#a6a8ae;"></div>
<div class="b" style="left:162.4px;top:182.1px;width:90.8px;height:68px;background:#ffffff;"></div>
<div class="b" style="left:162.4px;top:182.1px;width:10px;height:68px;background:linear-gradient(#d9d0e6,#cfc4df);"></div>
<svg class="b" style="left:162.4px;top:183.1px;" width="10" height="14" viewBox="0 0 10 14"><circle cx="10" cy="7" r="6" fill="none" stroke="#ebe5f3" stroke-width="0.5" opacity="0.8"/><circle cx="8" cy="11.5" r="3" fill="none" stroke="#bfb1d3" stroke-width="1" opacity="0.6"/></svg>
<span class="t" style="left:155.9px;top:182.68px;font:bold 6.2px 'Liberation Sans',sans-serif;line-height:7.44px;color:#3c3c3c;transform:scaleX(0.956);">2</span>
<span class="t" style="left:194px;top:187.24px;font:5.6px 'Liberation Sans',sans-serif;line-height:6.72px;color:#58585c;transform:scaleX(0.919);">The Azerbaijanis</span>
<svg class="b" style="left:176.8px;top:198.2px;" width="36" height="35.4" viewBox="0 0 36 35.4"><defs><filter id="pb"><feGaussianBlur stdDeviation="0.55"/></filter><clipPath id="pc"><rect width="36" height="35.4"/></clipPath></defs><rect width="36" height="35.4" fill="#2a2624"/><g clip-path="url(#pc)"><g filter="url(#pb)"><rect x="-1" y="-1" width="38" height="8" fill="#3b3634"/><path d="M20 2.4 H31 V6 H20 Z" fill="#7a3f2a"/><path d="M0 9 Q4 5 8 9 L9 22 L8 35.4 H0 Z" fill="#807d7c"/><path d="M1 11 Q4 9 6 12 V18 H1 Z" fill="#9c9a9a"/><path d="M10 3 Q14 0 17 4 L24 20 Q31 28 33 35.4 H20 L16 20 Z" fill="#ead0d6"/><path d="M11 6 Q13 3 16 6 L16.5 12 Q14 15 11.5 12 Z" fill="#c7a58f"/><path d="M9 14 Q14 13 17 18 L20 35.4 H9 Q8 24 9 14 Z" fill="#5a463c"/><path d="M20 20 Q26 26 28 35.4 H22 Z" fill="#f6e6ea"/><path d="M24 10 H36 V22 H28 Z" fill="#33302e"/></g></g></svg>
<div class="b" style="left:219px;top:197.9px;width:121.6px;font:8.6px/11.6px 'Liberation Sans',sans-serif;color:#1a1a1a;text-align:justify;white-space:normal;transform:scale(0.25);transform-origin:0 0;font-weight:bold;">The population of Azerbaijan exceeded 10 million as of mid-January 2019.</div>
<div class="b" style="left:219px;top:206.4px;width:121.6px;font:8.6px/11.8px 'Liberation Sans',sans-serif;color:#1a1a1a;text-align:justify;white-space:normal;transform:scale(0.25);transform-origin:0 0;font-weight:bold;">Azerbaijanis, it exceeds 91.6% of the population of the Republic are Azerbaijanis, is the autochthonous and titular nationality.</div>
<div class="b" style="left:219px;top:221.5px;width:121.6px;font:8.6px/11.2px 'Liberation Sans',sans-serif;color:#1a1a1a;text-align:justify;white-space:normal;transform:scale(0.25);transform-origin:0 0;text-align:left;font-weight:bold;">Azerbaijanis speak the Azeri-Turkish.</div>
<div class="b" style="left:217.2px;top:199.2px;width:0.7px;height:0.7px;background:#555;"></div>
<div class="b" style="left:217.2px;top:207.8px;width:0.7px;height:0.7px;background:#555;"></div>
<div class="b" style="left:217.2px;top:222.8px;width:0.7px;height:0.7px;background:#555;"></div>
<div class="b" style="left:161.4px;top:255.59999999999997px;width:93.6px;height:70.4px;background:#a6a8ae;"></div>
<div class="b" style="left:162.4px;top:256.4px;width:90.8px;height:68.2px;background:#ffffff;"></div>
<div class="b" style="left:162.4px;top:256.4px;width:10px;height:68.2px;background:linear-gradient(#d9d0e6,#cfc4df);"></div>
<svg class="b" style="left:162.4px;top:257.4px;" width="10" height="14" viewBox="0 0 10 14"><circle cx="10" cy="7" r="6" fill="none" stroke="#ebe5f3" stroke-width="0.5" opacity="0.8"/><circle cx="8" cy="11.5" r="3" fill="none" stroke="#bfb1d3" stroke-width="1" opacity="0.6"/></svg>
<span class="t" style="left:155.9px;top:256.98px;font:bold 6.2px 'Liberation Sans',sans-serif;line-height:7.44px;color:#3c3c3c;transform:scaleX(0.956);">3</span>
<span class="t" style="left:178px;top:261.76px;font:5.4px 'Liberation Sans',sans-serif;line-height:6.48px;color:#58585c;transform:scaleX(0.903);">The ethnic mosaic of Azerbaijan</span>
<svg class="b" style="left:178.2px;top:274.4px;" width="33" height="39" viewBox="0 0 33 39"><defs><filter id="mb"><feGaussianBlur stdDeviation="0.3"/></filter></defs><g filter="url(#mb)"><path d="M8 1.5 L11 0.7 L17 6 L21.2 0.7 L25.5 8.8 L24.5 10.5 L31.4 15.3 L28.5 18.2 L25 20.4 L25.5 26.3 L25.5 32.1 L23.4 38 L20.4 35.8 L19 31.4 L20.5 29 L16.8 25 L14 28.5 L10.2 30.7 L8.8 24.8 L6.6 23.4 L5.8 19.7 L8 17 L5.1 16 L2.2 11 L1.5 6.6 L5.1 5.1 L9 7 Z" fill="#a9d25a"/><path d="M1.5 6.6 L5.1 5.1 L9 7 L12 9.5 L12 13.5 L9 17 L5.1 16 L2.2 11 Z" fill="#5e5a9c"/><path d="M8 1.5 L11 0.7 L17 6 L17.5 9.8 L12 9.5 L9 7 Z" fill="#6db8ea"/><path d="M21.2 0.7 L25.5 8.8 L24.5 10.5 L17.5 9.8 L17 6 Z" fill="#f0c79a"/><path d="M17.5 9.8 L24.5 10.5 L25.5 14.6 L21 17 L17.5 14 Z" fill="#ee6a52"/><path d="M24.5 10.5 L31.4 15.3 L28.5 18.2 L25 20.4 L21 17 L25.5 14.6 Z" fill="#f2a62a"/><path d="M19 31.4 L20.5 29 L25.5 26.3 L25.5 32.1 L23.4 38 L20.4 35.8 Z" fill="#4f8f34"/><path d="M9 17 L12 13.5 L13.5 19 L16.8 25 L14 28.5 L10.2 30.7 L8.8 24.8 Z" fill="#dca02e"/><path d="M5.8 19.7 L8 17 L9 17 L8.8 24.8 L6.6 23.4 Z" fill="#8c8a5a"/><path d="M0 23.4 L3.6 24.8 L7.3 31.4 L5.8 33.3 L2.2 30 Z" fill="#9a5a86"/></g></svg>
<div class="b" style="left:215.8px;top:271.9px;width:136px;font:9.4px/11.28px 'Liberation Sans',sans-serif;color:#111;text-align:justify;white-space:normal;transform:scale(0.25);transform-origin:0 0;font-weight:bold;">Azerbaijan is an example of Caucasian cultural mosaic. Historic ethnic and religious environment no major shocks. Azerbaijan Republic is a polyethnical country. Its population is subdivided to state-forming Azerbaijani Turks, autochthonic national minorities and allochthonic ethnic minorities.</div>
<div class="b" style="left:215.8px;top:303.6px;width:136px;font:9.4px/11.28px 'Liberation Sans',sans-serif;color:#111;text-align:justify;white-space:normal;transform:scale(0.25);transform-origin:0 0;font-weight:bold;">They come in almost all regions where ethnic minorities live compactly.</div>
<div class="b" style="left:161.4px;top:330.3px;width:93.6px;height:70.8px;background:#a6a8ae;"></div>
<div class="b" style="left:162.4px;top:331.1px;width:90.8px;height:68.6px;background:#ffffff;"></div>
<div class="b" style="left:162.4px;top:331.1px;width:10px;height:68.6px;background:linear-gradient(#d9d0e6,#cfc4df);"></div>
<svg class="b" style="left:162.4px;top:332.1px;" width="10" height="14" viewBox="0 0 10 14"><circle cx="10" cy="7" r="6" fill="none" stroke="#ebe5f3" stroke-width="0.5" opacity="0.8"/><circle cx="8" cy="11.5" r="3" fill="none" stroke="#bfb1d3" stroke-width="1" opacity="0.6"/></svg>
<span class="t" style="left:155.9px;top:331.68px;font:bold 6.2px 'Liberation Sans',sans-serif;line-height:7.44px;color:#3c3c3c;transform:scaleX(0.956);">4</span>
<span class="t" style="left:178px;top:333.08px;font:5.2px 'Liberation Sans',sans-serif;line-height:6.24px;color:#626266;transform:scaleX(0.875);">The autochthonic national</span>
<span class="t" style="left:178px;top:339.28px;font:5.2px 'Liberation Sans',sans-serif;line-height:6.24px;color:#626266;transform:scaleX(0.901);">minorities</span>
<div class="b" style="left:177.8px;top:351.8px;width:284px;font:13.0px/16.6px 'Liberation Sans',sans-serif;color:#111;text-align:justify;white-space:normal;transform:scale(0.25);transform-origin:0 0;letter-spacing:-0.05px;">Such as Udins, Ingiloys, Grizes, Khinalugs, Buduqs, Talishs, Lezghins, who do not have any other motherlands but historical Azerbaijan and therefore, together with Azerbaijani Turks they can be considered to be members of a single polyethnical Azerbaijanian nation.</div>
<div class="b" style="left:161.4px;top:405.59999999999997px;width:93.6px;height:22.2px;background:#a6a8ae;"></div>
<div class="b" style="left:162.4px;top:406.4px;width:90.8px;height:20px;background:#ffffff;"></div>
<div class="b" style="left:162.4px;top:406.4px;width:10px;height:20px;background:linear-gradient(#d9d0e6,#cfc4df);"></div>
<svg class="b" style="left:162.4px;top:407.4px;" width="10" height="14" viewBox="0 0 10 14"><circle cx="10" cy="7" r="6" fill="none" stroke="#ebe5f3" stroke-width="0.5" opacity="0.8"/><circle cx="8" cy="11.5" r="3" fill="none" stroke="#bfb1d3" stroke-width="1" opacity="0.6"/></svg>
<span class="t" style="left:155.9px;top:406.98px;font:bold 6.2px 'Liberation Sans',sans-serif;line-height:7.44px;color:#3c3c3c;transform:scaleX(0.956);">5</span>
<span class="t" style="left:178px;top:408.08px;font:5.2px 'Liberation Sans',sans-serif;line-height:6.24px;color:#626266;transform:scaleX(0.875);">The autochthonic national</span>
<span class="t" style="left:178px;top:413.68px;font:5.2px 'Liberation Sans',sans-serif;line-height:6.24px;color:#626266;transform:scaleX(0.895);">minorities of Azerbaijan</span>
<div class="b" style="left:359px;top:95px;width:430.2px;height:310px;background:#b3b5b9;"></div>
<div class="b" style="left:366px;top:100.4px;width:417px;height:300px;background:#ffffff;"></div>
<div class="b" style="left:366px;top:100.4px;width:45.7px;height:300px;background:linear-gradient(#d2c8e1 0%,#ccc0dc 30%,#c8bbd8 100%);"></div>
<svg class="b" style="left:366px;top:100.4px;" width="60" height="300" viewBox="0 0 60 300"><defs><clipPath id="bd"><rect x="0" y="0" width="45.7" height="300"/></clipPath><radialGradient id="yd" cx="0.4" cy="0.4" r="0.7"><stop offset="0" stop-color="#fdf6c8"/><stop offset="1" stop-color="#f3dc80"/></radialGradient></defs><g clip-path="url(#bd)"><circle cx="0" cy="-4" r="43" fill="#ffffff" opacity="0.22"/><circle cx="45.4" cy="39.8" r="38.5" fill="#b9a7cf" opacity="0.22"/><circle cx="32" cy="73.2" r="20.8" fill="none" stroke="#b3a3c8" stroke-width="7.4" opacity="0.5"/><circle cx="32" cy="73.2" r="24.5" fill="none" stroke="#ddd5e8" stroke-width="0.7" opacity="0.8"/><circle cx="32" cy="73.2" r="17.1" fill="none" stroke="#a99ac0" stroke-width="0.8" opacity="0.7"/><circle cx="45.4" cy="39.8" r="38.5" fill="none" stroke="#f4f0f8" stroke-width="1"/></g><circle cx="46.6" cy="69.7" r="4.6" fill="url(#yd)"/><circle cx="53.6" cy="62.6" r="1.6" fill="#e2deea" stroke="#cfcadb" stroke-width="0.4"/></svg>
<span class="t" style="left:454.2px;top:190.38px;font:24.2px 'Liberation Sans',sans-serif;line-height:29.04px;color:#5f5f64;transform:scaleX(0.931);-webkit-text-stroke:0.3px #5f5f64;">Ethnic</span>
<span class="t" style="left:524.2px;top:190.38px;font:24.2px 'Liberation Sans',sans-serif;line-height:29.04px;color:#5f5f64;transform:scaleX(0.971);-webkit-text-stroke:0.3px #5f5f64;">Diversity</span>
<span class="t" style="left:621.8px;top:190.38px;font:24.2px 'Liberation Sans',sans-serif;line-height:29.04px;color:#5f5f64;transform:scaleX(1.020);-webkit-text-stroke:0.3px #5f5f64;">of</span>
<span class="t" style="left:646px;top:190.38px;font:24.2px 'Liberation Sans',sans-serif;line-height:29.04px;color:#5f5f64;transform:scaleX(0.931);-webkit-text-stroke:0.3px #5f5f64;">Azerbaijan</span>
<div class="b" style="left:879.8px;top:93.4px;width:7.6px;height:306px;background:#dadde3;"></div>
<div class="b" style="left:887.4px;top:93.4px;width:3.2px;height:324.2px;background:linear-gradient(90deg,#dde2ea,#b4caec);"></div>
<div class="b" style="left:890.4px;top:93.4px;width:0.9px;height:324.2px;background:#709bd8;"></div>
<div class="b" style="left:891.3px;top:93.4px;width:2px;height:324.2px;background:#cbd8ea;"></div>
<svg class="b" style="left:881.4px;top:96.6px;" width="4.6" height="3" viewBox="0 0 4.6 3"><path d="M0 2.8 L2.3 0.2 L4.6 2.8 Z" fill="#50545c"/></svg>
<div class="b" style="left:880.4px;top:101.4px;width:6.8px;height:8.2px;background:#f6f7f9;border:0.7px solid #c0c4ca;border-radius:1px;"></div>
<div class="b" style="left:882.4px;top:104.2px;width:2.8px;height:0.5px;background:#b4b8be;"></div>
<div class="b" style="left:882.4px;top:105.6px;width:2.8px;height:0.5px;background:#b4b8be;"></div>
<div class="b" style="left:882.4px;top:107px;width:2.8px;height:0.5px;background:#b4b8be;"></div>
<svg class="b" style="left:881.4px;top:370px;" width="4.6" height="3" viewBox="0 0 4.6 3"><path d="M0 0.2 H4.6 L2.3 2.8 Z" fill="#50545c"/></svg>
<svg class="b" style="left:881.4px;top:377.6px;" width="4.6" height="4.4" viewBox="0 0 4.6 4.4"><path d="M0 2 L2.3 0 L4.6 2 Z M0 4.2 L2.3 2.2 L4.6 4.2 Z" fill="#50545c"/></svg>
<svg class="b" style="left:881.4px;top:384.6px;" width="4.6" height="4.4" viewBox="0 0 4.6 4.4"><path d="M0 0 H4.6 L2.3 2 Z M0 2.2 H4.6 L2.3 4.2 Z" fill="#50545c"/></svg>
<div class="b" style="left:268.2px;top:398.8px;width:622px;height:1.6px;background:#b4b8be;"></div>
<div class="b" style="left:268.2px;top:400.4px;width:622px;height:17.4px;background:#ffffff;"></div>
<div class="b" style="left:879.6px;top:400.4px;width:8.4px;height:17.4px;background:#eef0f3;"></div>
<svg class="b" style="left:881.6px;top:403.4px;" width="4.2" height="2.8" viewBox="0 0 4.2 2.8"><path d="M0 2.6 L2.1 0.2 L4.2 2.6 Z" fill="#a4a8ae"/></svg>
<svg class="b" style="left:881.6px;top:412.6px;" width="4.2" height="2.8" viewBox="0 0 4.2 2.8"><path d="M0 0.2 H4.2 L2.1 2.6 Z" fill="#a4a8ae"/></svg>
<span class="t" style="left:272.8px;top:403.48px;font:7.7px 'Liberation Sans',sans-serif;line-height:9.24px;color:#262626;transform:scaleX(0.954);">Заметки к слайду</span>
<div class="b" style="left:140px;top:417.8px;width:770px;height:1px;background:#aeb3ba;"></div>
<div class="b" style="left:140px;top:418.8px;width:770px;height:12px;background:linear-gradient(#dfe2e6,#cfd3d8);"></div>
<span class="t" style="left:155.2px;top:420.12px;font:5.8px 'Liberation Sans',sans-serif;line-height:6.96px;color:#4a4a4a;transform:scaleX(0.867);">Слайд 1 из 90</span>
<div class="b" style="left:192.4px;top:419.6px;width:0.6px;height:8px;background:#b4b8be;"></div>
<span class="t" style="left:197.2px;top:420.12px;font:5.8px 'Liberation Sans',sans-serif;line-height:6.96px;color:#4a4a4a;transform:scaleX(0.930);">&#x27;Солнцестояние&#x27;</span>
<div class="b" style="left:243.4px;top:419.6px;width:0.6px;height:8px;background:#b4b8be;"></div>
<svg class="b" style="left:247.6px;top:420px;" width="8" height="7.4" viewBox="0 0 8 7.4"><path d="M0.6 3.4 L3 6 L7.2 0.8" fill="none" stroke="#c23a2a" stroke-width="1.1"/><rect x="0.6" y="4.8" width="5" height="2.2" fill="#6f86c0" opacity="0.7"/></svg>
<span class="t" style="left:263px;top:420.12px;font:5.8px 'Liberation Sans',sans-serif;line-height:6.96px;color:#4a4a4a;transform:scaleX(0.932);">русский</span>
<div class="b" style="left:286.4px;top:419.6px;width:0.6px;height:8px;background:#b4b8be;"></div>
<div class="b" style="left:765.6px;top:419.4px;width:9.2px;height:8.6px;background:#fbd676;border:0.7px solid #e0a93a;border-radius:1px;"></div>
<svg class="b" style="left:767.2px;top:421px;" width="6" height="5.4" viewBox="0 0 6 5.4"><rect x="0.3" y="0.3" width="5.4" height="4.8" fill="#fff" stroke="#6a6f7a" stroke-width="0.6"/><path d="M2 0.3 V5.1" stroke="#6a6f7a" stroke-width="0.6"/></svg>
<svg class="b" style="left:776.6px;top:421px;" width="6" height="5.4" viewBox="0 0 6 5.4"><g fill="none" stroke="#6a6f7a" stroke-width="0.6"><rect x="0.3" y="0.3" width="2.2" height="2"/><rect x="3.3" y="0.3" width="2.2" height="2"/><rect x="0.3" y="3" width="2.2" height="2"/><rect x="3.3" y="3" width="2.2" height="2"/></g></svg>
<svg class="b" style="left:785px;top:421px;" width="6" height="5.4" viewBox="0 0 6 5.4"><g fill="none" stroke="#6a6f7a" stroke-width="0.6"><rect x="0.3" y="0.3" width="2.4" height="4.8"/><rect x="3.2" y="0.3" width="2.4" height="4.8"/></g></svg>
<svg class="b" style="left:793.4px;top:421px;" width="6" height="5.4" viewBox="0 0 6 5.4"><g fill="none" stroke="#6a6f7a" stroke-width="0.7"><path d="M0 0.4 H6 M0.8 0.4 V3.4 H5.2 V0.4 M3 3.4 V5.2 M1.6 5.2 H4.4"/></g></svg>
<span class="t" style="left:805px;top:420.24px;font:5.6px 'Liberation Sans',sans-serif;line-height:6.72px;color:#5a5a5a;transform:scaleX(0.857);">94%</span>
<svg class="b" style="left:818.6px;top:420.4px;" width="6.4" height="6.4" viewBox="0 0 6.4 6.4"><circle cx="3.2" cy="3.2" r="2.8" fill="#f4f5f7" stroke="#7d828a" stroke-width="0.6"/><path d="M1.8 3.2 H4.6" stroke="#4f545c" stroke-width="0.8"/></svg>
<div class="b" style="left:826px;top:423.3px;width:45.6px;height:0.7px;background:#9a9fa6;"></div>
<svg class="b" style="left:845px;top:420.2px;" width="4.4" height="6.6" viewBox="0 0 4.4 6.6"><path d="M0.4 0.4 H4 V4.4 L2.2 6.2 L0.4 4.4 Z" fill="#f2f3f5" stroke="#7d828a" stroke-width="0.6"/></svg>
<svg class="b" style="left:872.4px;top:420.4px;" width="6.4" height="6.4" viewBox="0 0 6.4 6.4"><circle cx="3.2" cy="3.2" r="2.8" fill="#f4f5f7" stroke="#7d828a" stroke-width="0.6"/><path d="M1.8 3.2 H4.6 M3.2 1.8 V4.6" stroke="#4f545c" stroke-width="0.8"/></svg>
<svg class="b" style="left:882.4px;top:420px;" width="7.4" height="7.4" viewBox="0 0 7.4 7.4"><rect x="0.4" y="0.4" width="6.6" height="6.6" fill="#eef0f3" stroke="#7d828a" stroke-width="0.6"/><path d="M1.6 1.6 L5.8 5.8 M5.8 1.6 L1.6 5.8" stroke="#5f646c" stroke-width="0.7"/></svg>
</div></div>
<div class="b" style="left:358.6px;top:371px;width:325.2px;height:33.5px;background:#3d3d3d;border-radius:2px;box-shadow:0 1px 3px rgba(0,0,0,.45);"></div>
<div class="b" style="left:358.6px;top:371px;width:54.6px;height:33.5px;background:#454545;border-radius:2px 0 0 2px;"></div>
<div class="b" style="left:413.2px;top:371px;width:0.8px;height:33.5px;background:#2a2a2a;"></div>
<div class="b" style="left:548.8px;top:371px;width:101.6px;height:33.5px;background:#424242;"></div>
<div class="b" style="left:548.8px;top:397.8px;width:101.6px;height:0.8px;background:#3a3a3a;"></div>
<div class="b" style="left:650.2px;top:371px;width:33.6px;height:33.5px;background:#a32b45;border-radius:0 2px 2px 0;"></div>
<span class="t" style="left:369px;top:383.24px;font:8.6px 'Liberation Sans',sans-serif;line-height:10.32px;color:#c4c4c4;">01:00:05</span>
<svg class="b" style="left:423.6px;top:383.6px;" width="14.4" height="9.4" viewBox="0 0 14.4 9.4"><rect x="0.2" y="0.4" width="9.6" height="8.4" rx="1.4" fill="#ffffff"/><path d="M10.6 4.6 L13.8 1.6 V7.6 Z" fill="#ffffff"/></svg>
<svg class="b" style="left:457px;top:380.4px;" width="15.4" height="15.4" viewBox="0 0 15.4 15.4"><rect x="5.6" y="1.4" width="4.4" height="8" rx="2.2" fill="#d9d9d9"/><path d="M3.4 7.2 Q3.4 11.6 7.8 11.6 Q12.2 11.6 12.2 7.2 M7.8 11.6 V14.4" fill="none" stroke="#e2e2e2" stroke-width="0.9"/><path d="M1.2 14.4 L14.4 1" stroke="#3d3d3d" stroke-width="2.2"/><path d="M1.2 14.4 L14.4 1" stroke="#f0f0f0" stroke-width="0.8"/></svg>
<svg class="b" style="left:491px;top:381.6px;" width="14.6" height="12.6" viewBox="0 0 14.6 12.6"><rect x="0.6" y="0.6" width="13.4" height="9.8" rx="1" fill="none" stroke="#ffffff" stroke-width="1"/><rect x="4.6" y="8.6" width="5.4" height="4" fill="#3d3d3d"/><path d="M7.3 12.2 V4.2 M4.6 6.6 L7.3 3.9 L10 6.6" fill="none" stroke="#ffffff" stroke-width="1.1"/></svg>
<svg class="b" style="left:524.6px;top:386.4px;" width="15" height="4" viewBox="0 0 15 4"><circle cx="2" cy="2" r="1.6" fill="#ffffff"/><circle cx="7.4" cy="2" r="1.6" fill="#ffffff"/><circle cx="12.8" cy="2" r="1.6" fill="#ffffff"/></svg>
<svg class="b" style="left:559.6px;top:380.4px;" width="12.4" height="15.2" viewBox="0 0 12.4 15.2"><path d="M2.6 8.6 V3.4 Q2.6 2.6 3.4 2.6 Q4.2 2.6 4.2 3.4 V1.8 Q4.2 1 5 1 Q5.8 1 5.8 1.8 V1.4 Q5.8 0.6 6.6 0.6 Q7.4 0.6 7.4 1.4 V2.6 Q7.4 1.9 8.2 1.9 Q9 1.9 9 2.7 V8.2 L10.2 6.6 Q10.9 5.9 11.6 6.5 Q11.9 7 11.5 7.6 L9 12.4 Q7.8 14.6 5.6 14.6 Q2.6 14.6 2.6 11.2 Z" fill="none" stroke="#ededed" stroke-width="0.9" stroke-linejoin="round"/><path d="M4.2 3.4 V7.4 M5.8 1.8 V7.2 M7.4 2.6 V7.2" stroke="#ededed" stroke-width="0.7"/></svg>
<svg class="b" style="left:594px;top:382.2px;" width="12.4" height="12.4" viewBox="0 0 12.4 12.4"><path d="M1.2 0.6 H11 Q11.8 0.6 11.8 1.4 V8.4 Q11.8 9.2 11 9.2 H9.6 L9.8 11.8 L6.8 9.2 H1.2 Q0.5 9.2 0.5 8.4 V1.4 Q0.5 0.6 1.2 0.6 Z" fill="none" stroke="#e4e4e4" stroke-width="0.9" stroke-linejoin="round"/><path d="M2.8 3.4 H8.6 M2.8 5.8 H6.6" stroke="#e4e4e4" stroke-width="0.8"/></svg>
<svg class="b" style="left:627.2px;top:381.8px;" width="12.4" height="12.6" viewBox="0 0 12.4 12.6"><g fill="none" stroke="#e4e4e4" stroke-width="0.9"><circle cx="2.7" cy="3.8" r="1.5"/><circle cx="8.2" cy="2.3" r="1.8"/><path d="M5.4 5.6 H11.2 V9.4 Q11.2 12 8.3 12 Q5.4 12 5.4 9.4 Z" stroke-linejoin="round"/><path d="M4.2 6.6 H0.8 V9 Q0.8 11.2 3.4 11.2 H4.4"/></g></svg>
<svg class="b" style="left:660.2px;top:384.6px;" width="14.6" height="6.8" viewBox="0 0 14.6 6.8"><path d="M0.5 4.4 Q0.3 2.8 1.8 2 Q4.4 0.5 7.3 0.5 Q10.2 0.5 12.8 2 Q14.3 2.8 14.1 4.4 L13.9 5.6 Q13.7 6.4 12.9 6.2 L10.7 5.6 Q10.1 5.4 10.1 4.8 L10 3.5 Q8.7 3 7.3 3 Q5.9 3 4.6 3.5 L4.5 4.8 Q4.5 5.4 3.9 5.6 L1.7 6.2 Q0.9 6.4 0.7 5.6 Z" fill="#ffffff"/></svg>
<div class="b" style="left:0px;top:488.2px;width:1000px;height:25.8px;background:#3d3d3d;"></div>
<div class="b" style="left:0;top:488.2px;width:1000px;height:25.8px;filter:blur(0.3px);">
<div class="b" style="left:275px;top:0.0px;width:32px;height:25.8px;background:#c06f35;"></div>
<div class="b" style="left:275px;top:23.8px;width:32px;height:2px;background:#f08a2c;"></div>
<div class="b" style="left:180.8px;top:23.8px;width:26.2px;height:2px;background:#88b8e0;"></div>
<div class="b" style="left:213px;top:23.8px;width:21.6px;height:2px;background:#88b8e0;"></div>
<div class="b" style="left:310px;top:23.8px;width:26.6px;height:2px;background:#88b8e0;"></div>
<div class="b" style="left:342px;top:23.8px;width:26.8px;height:2px;background:#88b8e0;"></div>
<div class="b" style="left:374.2px;top:23.8px;width:26.8px;height:2px;background:#88b8e0;"></div>
<div class="b" style="left:406.8px;top:23.8px;width:20.4px;height:2px;background:#88b8e0;"></div>
<div class="b" style="left:439px;top:23.8px;width:26.6px;height:2px;background:#88b8e0;"></div>
<div class="b" style="left:235.2px;top:23.8px;width:4.6px;height:2px;background:#6d8196;"></div>
<div class="b" style="left:427.8px;top:23.8px;width:5.4px;height:2px;background:#6d8196;"></div>
<svg class="b" style="left:9.8px;top:7.4px;" width="11.4" height="11" viewBox="0 0 11.4 11"><path d="M0 1.6 L4.8 0.9 V5.2 H0 Z M5.5 0.8 L11.4 0 V5.2 H5.5 Z M0 5.9 H4.8 V10.2 L0 9.5 Z M5.5 5.9 H11.4 V11 L5.5 10.2 Z" fill="#ffffff"/></svg>
<svg class="b" style="left:41px;top:7.6px;" width="11.6" height="10.8" viewBox="0 0 11.6 10.8"><circle cx="7.2" cy="4.2" r="3.4" fill="none" stroke="#f0f0f0" stroke-width="1"/><path d="M4.8 6.6 L0.6 10.4" stroke="#f0f0f0" stroke-width="1.1"/></svg>
<svg class="b" style="left:72.6px;top:7.8px;" width="11.6" height="10.4" viewBox="0 0 11.6 10.4"><g fill="none" stroke="#f0f0f0" stroke-width="0.9"><rect x="1.6" y="2.6" width="5.8" height="5.2"/><path d="M1.6 0.4 V2.6 M7.4 0.4 V2.6 M1.6 7.8 V10 M7.4 7.8 V10 M0.2 1.2 H1.6 M0.2 9.2 H1.6 M7.4 1.2 H8.6 M7.4 9.2 H8.6"/></g><rect x="9.6" y="3.6" width="1.1" height="6.4" fill="#f0f0f0"/><rect x="9.6" y="0.6" width="1.1" height="1.6" fill="#f0f0f0"/></svg>
<svg class="b" style="left:106.4px;top:4.8px;" width="16.8" height="16.8" viewBox="0 0 16.8 16.8"><defs><linearGradient id="al" x1="0" y1="1" x2="1" y2="0"><stop offset="0" stop-color="#6a3fe0"/><stop offset="1" stop-color="#c160f2"/></linearGradient></defs><circle cx="8.4" cy="8.4" r="8.2" fill="url(#al)"/><path d="M8.4 4.6 Q9 4.6 9.5 5.4 L12 9.8 Q12.6 11.2 11.2 11.4 Q8.4 11.8 5.6 11.4 Q4.2 11.2 4.8 9.8 L7.3 5.4 Q7.8 4.6 8.4 4.6 Z" fill="#ffffff"/></svg>
<div class="b" style="left:136.4px;top:6.4px;width:0.6px;height:13.4px;background:#6a6a6a;"></div>
<div class="b" style="left:137.6px;top:6.4px;width:0.6px;height:13.4px;background:#555;"></div>
<svg class="b" style="left:153.8px;top:5.6px;" width="15.6" height="14.4" viewBox="0 0 15.6 14.4"><defs><linearGradient id="ph" x1="0" y1="0" x2="1" y2="1"><stop offset="0" stop-color="#2f8fe6"/><stop offset="1" stop-color="#3a63c8"/></linearGradient></defs><rect width="15.6" height="14.4" rx="0.8" fill="url(#ph)"/><path d="M0 10 L5 4.6 L10 10 L15.6 14.4 H0 Z" fill="#1f3f8a"/><path d="M7 9.4 L11.4 5.6 L15.6 9.6 V14.4 H9 Z" fill="#5a7fe0" opacity="0.85"/><path d="M0 11 L5 7 L12 14.4 H0 Z" fill="#16306e"/><circle cx="9.6" cy="3" r="1.2" fill="#f4f8ff"/></svg>
<svg class="b" style="left:186.2px;top:6.0px;" width="15.2" height="12.8" viewBox="0 0 15.2 12.8"><path d="M0.4 1.2 Q0.4 0.4 1.2 0.4 H5.6 L6.8 1.8 H14 Q14.8 1.8 14.8 2.6 V11.8 H0.4 Z" fill="#f0b429"/><rect x="0.4" y="3" width="14.4" height="8.8" fill="#fbd766"/><rect x="3.4" y="6.6" width="8.4" height="5.2" fill="#3f8fd0"/><rect x="5" y="8.4" width="5.2" height="3.4" fill="#cfe6f8"/><rect x="0.4" y="11.4" width="14.4" height="1.2" fill="#d89a1e"/></svg>
<svg class="b" style="left:218.2px;top:5.0px;" width="15.4" height="15.4" viewBox="0 0 15.4 15.4"><circle cx="7.7" cy="7.7" r="7.5" fill="#e03c31"/><path d="M7.7 7.7 L1.2 3.95 A7.5 7.5 0 0 0 7.7 15.2 Z" fill="#2aa44a"/><path d="M7.7 7.7 L7.7 15.2 A7.5 7.5 0 0 0 14.2 3.95 Z" fill="#f6c31a"/><path d="M1.2 3.95 A7.5 7.5 0 0 1 14.2 3.95 L7.7 3.95 Z" fill="#e03c31"/><path d="M1.2 3.95 L4.6 9.6 L7.7 7.7 Z" fill="#2aa44a"/><circle cx="7.7" cy="7.7" r="3.5" fill="#f2f2f2"/><circle cx="7.7" cy="7.7" r="2.7" fill="#4a8af4"/></svg>
<svg class="b" style="left:250.8px;top:5.0px;" width="15.4" height="15.4" viewBox="0 0 15.4 15.4"><circle cx="7.7" cy="7.7" r="7.5" fill="#f39a1e"/><path d="M1.4 3.6 A7.5 7.5 0 0 1 14.6 4.6 L7.7 7.7 Z" fill="#7b45c8"/><path d="M7.7 15.2 A7.5 7.5 0 0 0 15 9.6 L7.7 7.7 Z" fill="#f4c12a"/><circle cx="7.7" cy="7.7" r="4.3" fill="#f6f2ea"/><path d="M5.8 5.4 H9.6 V8 Q9.6 10 7.7 10.8 Q5.8 10 5.8 8 Z" fill="#5a4a3a"/></svg>
<svg class="b" style="left:282.4px;top:4.2px;" width="16.4" height="16.4" viewBox="0 0 16.4 16.4"><circle cx="5.4" cy="5.4" r="4.6" fill="#1e9ae0"/><circle cx="10.4" cy="10.4" r="4.6" fill="#1e9ae0"/><circle cx="7.9" cy="7.6" r="6" fill="#26a6ea"/></svg>
<span class="t" style="left:287.4px;top:6.0px;font:bold 10px 'Liberation Sans',sans-serif;line-height:12.0px;color:#ffffff;transform:scaleX(0.899);">S</span>
<svg class="b" style="left:290.8px;top:13.4px;" width="7.8" height="7.8" viewBox="0 0 7.8 7.8"><circle cx="3.9" cy="3.9" r="3.8" fill="#e5332d"/></svg>
<span class="t" style="left:293.4px;top:14.04px;font:bold 5.6px 'Liberation Sans',sans-serif;line-height:6.72px;color:#ffffff;transform:scaleX(0.896);">1</span>
<svg class="b" style="left:314.8px;top:5.0px;" width="15.6" height="16" viewBox="0 0 15.6 16"><circle cx="7.8" cy="7.6" r="7.4" fill="#3db94f"/><path d="M1.8 12 L1.2 15.6 L5.2 14 Z" fill="#3db94f"/><circle cx="7.8" cy="7.6" r="5.4" fill="none" stroke="#c9f2cf" stroke-width="0.9"/></svg>
<span class="t" style="left:318.2px;top:6.8px;font:bold 9px 'Liberation Sans',sans-serif;line-height:10.8px;color:#ffffff;">@</span>
<svg class="b" style="left:347.2px;top:4.8px;" width="15.6" height="16.4" viewBox="0 0 15.6 16.4"><path d="M3.6 0.8 H12 Q15 0.8 15 3.8 V9.6 Q15 12.6 12 12.6 H7 L4.4 15.8 V12.6 H3.6 Q0.6 12.6 0.6 9.6 V3.8 Q0.6 0.8 3.6 0.8 Z" fill="#7d51c8"/><path d="M4.4 2.4 H11.2 Q13.4 2.4 13.4 4.6 V8.8 Q13.4 11 11.2 11 H4.4 Q2.2 11 2.2 8.8 V4.6 Q2.2 2.4 4.4 2.4 Z" fill="#efe8fb"/><path d="M5 4 L6 3.8 L6.8 5.4 L6.2 6.2 Q7 7.8 8.6 8.4 L9.4 7.8 L10.8 8.6 L10.6 9.6 Q9.8 10.2 8.6 9.6 Q5.6 8.2 4.8 5.2 Z" fill="#7d51c8"/><path d="M8 3.6 Q10.8 3.8 11 6.6" fill="none" stroke="#7d51c8" stroke-width="0.7"/></svg>
<svg class="b" style="left:379.8px;top:4.8px;" width="15.8" height="15.8" viewBox="0 0 15.8 15.8"><defs><linearGradient id="eg" x1="0" y1="0" x2="1" y2="0.4"><stop offset="0" stop-color="#1f7fd6"/><stop offset="0.6" stop-color="#2fb3c8"/><stop offset="1" stop-color="#5fd064"/></linearGradient></defs><circle cx="7.9" cy="7.9" r="7.7" fill="url(#eg)"/><path d="M0.4 9 Q0.6 15.4 7.9 15.6 Q11.4 15.6 13.6 13 Q9.6 14.4 7.2 11.8 Q5.6 9.8 6.8 7.6 Q3 7.2 0.4 9 Z" fill="#1558b8"/><path d="M6.8 7.6 Q8.2 5.6 10.6 6.4 Q12.2 7.2 11.6 9 Q11 10.2 9.6 10.2 Q13.4 11.4 15.4 8.6 Q15.8 10.4 13.6 13 Q9.6 14.4 7.2 11.8 Q5.6 9.8 6.8 7.6 Z" fill="#3d3d3d" opacity="0.0"/><path d="M7.4 8.4 Q8 6.6 9.8 6.6 Q11.6 6.8 11.4 8.6 Q11.2 10 9.4 10 Q11.2 11 13.2 10.2 Q11.6 12.8 9 12.2 Q6.8 11.4 7.4 8.4 Z" fill="#3a3f46"/></svg>
<svg class="b" style="left:412.6px;top:6.0px;" width="14" height="13.2" viewBox="0 0 14 13.2"><rect x="6" y="1.2" width="7.8" height="10.8" fill="#f4f6fa"/><path d="M8.4 3.4 H13 M8.4 5.4 H13 M8.4 7.4 H13 M8.4 9.4 H13" stroke="#2f5aa8" stroke-width="0.9"/><path d="M0.2 1.4 L8.6 0 V13.2 L0.2 11.8 Z" fill="#2a5699"/></svg>
<span class="t" style="left:413.8px;top:8.6px;font:bold 7px 'Liberation Sans',sans-serif;line-height:8.4px;color:#ffffff;transform:scaleX(0.938);">W</span>
<svg class="b" style="left:445.8px;top:4.8px;" width="12.2" height="16" viewBox="0 0 12.2 16"><rect x="0.3" y="0.3" width="11.6" height="15.4" rx="0.6" fill="#8e8e8e"/><rect x="1.6" y="1.8" width="9" height="2.6" fill="#5fd0e6"/><g fill="#e9e9e9"><rect x="1.6" y="5.8" width="2.4" height="2.2"/><rect x="4.9" y="5.8" width="2.4" height="2.2"/><rect x="8.2" y="5.8" width="2.4" height="2.2"/><rect x="1.6" y="9" width="2.4" height="2.2"/><rect x="4.9" y="9" width="2.4" height="2.2"/><rect x="1.6" y="12.2" width="2.4" height="2.2"/><rect x="4.9" y="12.2" width="2.4" height="2.2"/></g><rect x="8.2" y="9" width="2.4" height="5.4" fill="#1f4f9a"/></svg>
<svg class="b" style="left:854px;top:10.2px;" width="9" height="5.4" viewBox="0 0 9 5.4"><path d="M0.5 4.8 L4.5 0.8 L8.5 4.8" fill="none" stroke="#f2f2f2" stroke-width="1"/></svg>
<svg class="b" style="left:869.8px;top:8.6px;" width="9" height="8.6" viewBox="0 0 9 8.6"><g fill="none" stroke="#e6e6e6" stroke-width="0.8"><path d="M0.6 8 A7.6 7.6 0 0 1 8.2 0.5"/><path d="M2.8 8 A5.4 5.4 0 0 1 8.2 2.7"/><path d="M5 8 A3.2 3.2 0 0 1 8.2 4.9"/></g><circle cx="7.6" cy="7.6" r="1" fill="#f2f2f2"/></svg>
<svg class="b" style="left:884.8px;top:10.2px;" width="10.4" height="6" viewBox="0 0 10.4 6"><rect x="0.5" y="0.5" width="8.6" height="5" fill="none" stroke="#f2f2f2" stroke-width="0.9"/><rect x="1.4" y="1.4" width="4.6" height="3.2" fill="#f2f2f2"/><rect x="9.4" y="1.8" width="0.9" height="2.4" fill="#f2f2f2"/></svg>
<span class="t" style="left:902px;top:8.4px;font:8px 'Liberation Sans',sans-serif;line-height:9.6px;color:#f2f2f2;transform:scaleX(0.823);-webkit-text-stroke:0.2px #f2f2f2;">РУС</span>
<span class="t" style="left:934.4px;top:2.24px;font:7.6px 'Liberation Sans',sans-serif;line-height:9.12px;color:#f2f2f2;transform:scaleX(0.905);-webkit-text-stroke:0.2px #f2f2f2;">15:29</span>
<span class="t" style="left:925.6px;top:14.34px;font:7.6px 'Liberation Sans',sans-serif;line-height:9.12px;color:#f2f2f2;transform:scaleX(0.915);-webkit-text-stroke:0.2px #f2f2f2;">15.12.2020</span>
<svg class="b" style="left:973px;top:7.8px;" width="11.4" height="10" viewBox="0 0 11.4 10"><path d="M0.5 0.5 H10.9 V7.4 H6.6 L5.7 9.2 L4.8 7.4 H0.5 Z" fill="none" stroke="#f2f2f2" stroke-width="0.9" stroke-linejoin="round"/></svg>
<div class="b" style="left:998.2px;top:0.0px;width:0.6px;height:25.8px;background:#6a6a6a;"></div>
</div>
</div>
</body>
</html>
